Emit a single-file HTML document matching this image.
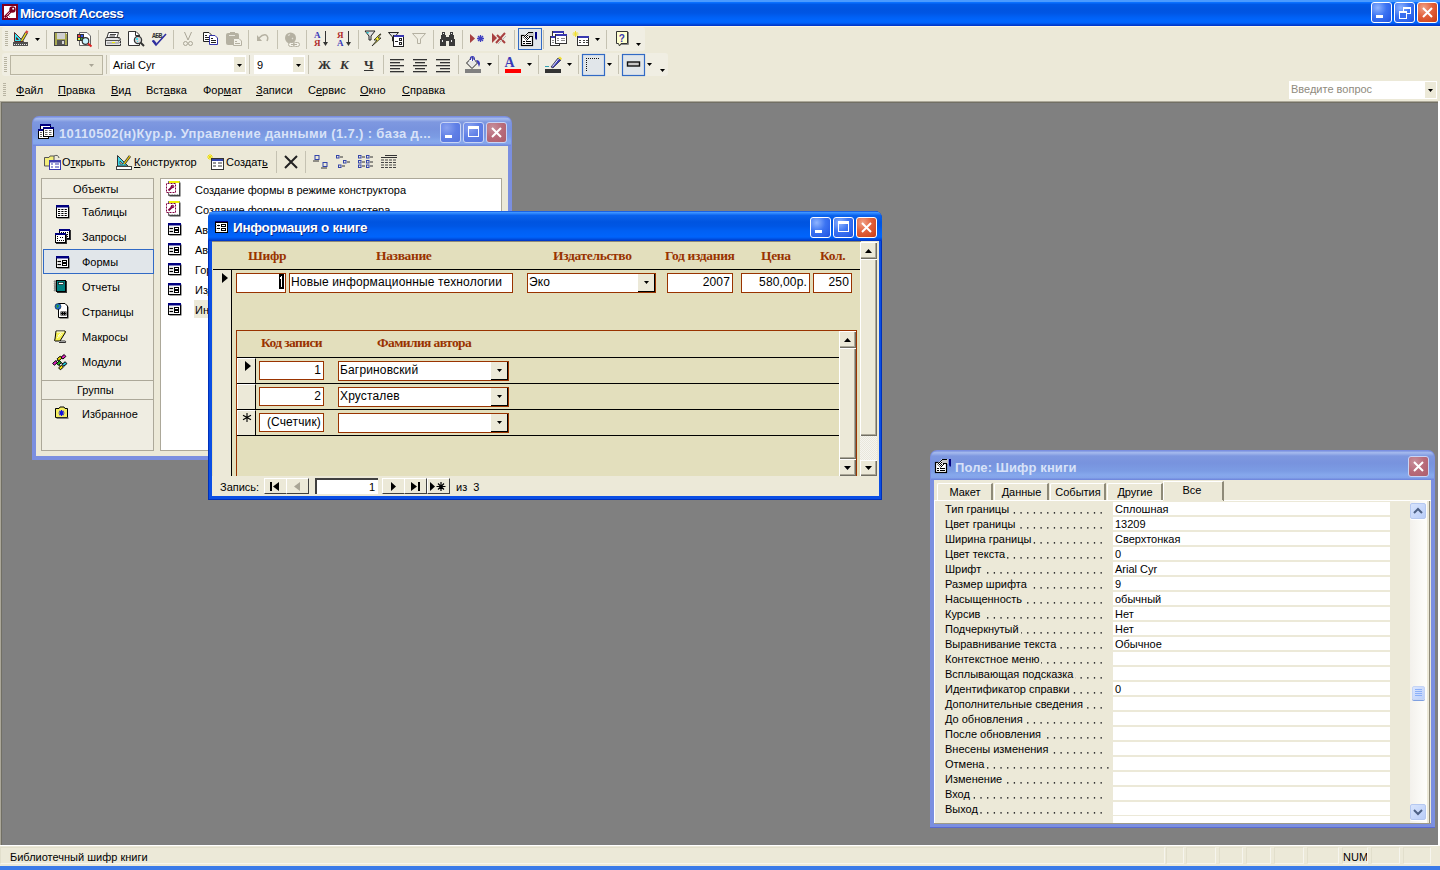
<!DOCTYPE html><html><head><meta charset="utf-8"><style>
*{margin:0;padding:0;box-sizing:border-box}
html,body{width:1440px;height:870px;overflow:hidden;background:#808080;font-family:"Liberation Sans",sans-serif;font-size:11px;color:#000}
.a{position:absolute}
.t{position:absolute;white-space:nowrap;font-size:11px;line-height:13px}
.u{text-decoration:underline}
svg{position:absolute;overflow:visible}
.sep{position:absolute;width:1px;background:#C5C2B2}
.xpbtn{position:absolute;width:21px;height:21px;border:1px solid #fff;border-radius:3px}
</style></head><body><div style="position:absolute;left:0px;top:0px;width:1440px;height:26px;background:linear-gradient(#4A9AFF 0,#4A9AFF 1.5px,#0A70FF 2.5px,#0058E6 4.5px,#0054E0 9px,#0056E4 13px,#0060F4 17px,#0066FF 21px,#0062FA 23px,#0048D8 24.5px,#0030C8 26px)"></div>
<svg style="left:2px;top:4px" width="16" height="16" viewBox="0 0 16 16"><rect x="0" y="0" width="16" height="16" fill="#800020"/><rect x="2" y="2" width="12" height="12" fill="#fff"/><path d="M3.5 12.5 L9 7" stroke="#800020" stroke-width="2.6" stroke-linecap="round"/><path d="M5 13 L6 14 M6.5 11.5 L7.5 12.5" stroke="#800020" stroke-width="1"/><circle cx="10.5" cy="5.5" r="3.2" fill="#800020"/><circle cx="11.2" cy="4.8" r="1" fill="#fff"/><path d="M4.5 11.5 L8 8" stroke="#fff" stroke-width="0.7"/></svg>
<div class="t" style="left:20px;top:6px;font-size:13.5px;font-weight:bold;color:#fff;line-height:16px;letter-spacing:-0.5px;text-shadow:1px 1px 0 #0A2A8A">Microsoft Access</div>
<div class="xpbtn" style="left:1371px;top:2px;background:radial-gradient(circle at 30% 25%,#8FB4FF 0,#3C74F2 45%,#2A5FE8 80%,#1D4FD8 100%);border-color:#fff"><div class="a" style="left:4px;top:12px;width:7px;height:3px;background:#fff"></div></div><div class="xpbtn" style="left:1394px;top:2px;background:radial-gradient(circle at 30% 25%,#8FB4FF 0,#3C74F2 45%,#2A5FE8 80%,#1D4FD8 100%);border-color:#fff"><div class="a" style="left:8px;top:4px;width:8px;height:7px;border:1px solid #fff;border-top-width:2px"></div><div class="a" style="left:4px;top:8px;width:8px;height:8px;border:1px solid #fff;border-top-width:2px;background:#3A6FEF"></div></div><div class="xpbtn" style="left:1417px;top:2px;background:radial-gradient(circle at 30% 25%,#F0A287 0,#E2613B 45%,#D24A22 80%,#C23A18 100%);border-color:#fff"><svg style="left:4px;top:4px" width="11" height="11" viewBox="0 0 11 11"><path d="M1 1 L10 10 M10 1 L1 10" stroke="#fff" stroke-width="2"/></svg></div>
<div style="position:absolute;left:0px;top:26px;width:1440px;height:76px;background:#ECE9D8"></div>
<div style="position:absolute;left:0px;top:26px;width:1440px;height:1px;background:#FBF7E6"></div>
<div style="position:absolute;left:2px;top:27px;width:643px;height:24px;background:#F0EEE3;border-radius:3px"></div>
<div style="position:absolute;left:2px;top:53px;width:666px;height:23px;background:#F0EEE3;border-radius:3px"></div>
<div style="position:absolute;left:2px;top:78px;width:1436px;height:23px;background:#ECE9D8"></div>
<div style="position:absolute;left:5px;top:31px;width:3px;height:1px;background:#B8B4A2"></div>
<div style="position:absolute;left:5px;top:33px;width:3px;height:1px;background:#B8B4A2"></div>
<div style="position:absolute;left:5px;top:35px;width:3px;height:1px;background:#B8B4A2"></div>
<div style="position:absolute;left:5px;top:37px;width:3px;height:1px;background:#B8B4A2"></div>
<div style="position:absolute;left:5px;top:39px;width:3px;height:1px;background:#B8B4A2"></div>
<div style="position:absolute;left:5px;top:41px;width:3px;height:1px;background:#B8B4A2"></div>
<div style="position:absolute;left:5px;top:43px;width:3px;height:1px;background:#B8B4A2"></div>
<div style="position:absolute;left:5px;top:45px;width:3px;height:1px;background:#B8B4A2"></div>
<div style="position:absolute;left:4px;top:57px;width:3px;height:1px;background:#B8B4A2"></div>
<div style="position:absolute;left:4px;top:59px;width:3px;height:1px;background:#B8B4A2"></div>
<div style="position:absolute;left:4px;top:61px;width:3px;height:1px;background:#B8B4A2"></div>
<div style="position:absolute;left:4px;top:63px;width:3px;height:1px;background:#B8B4A2"></div>
<div style="position:absolute;left:4px;top:65px;width:3px;height:1px;background:#B8B4A2"></div>
<div style="position:absolute;left:4px;top:67px;width:3px;height:1px;background:#B8B4A2"></div>
<div style="position:absolute;left:4px;top:69px;width:3px;height:1px;background:#B8B4A2"></div>
<div style="position:absolute;left:4px;top:71px;width:3px;height:1px;background:#B8B4A2"></div>
<div style="position:absolute;left:3px;top:83px;width:3px;height:1px;background:#B8B4A2"></div>
<div style="position:absolute;left:3px;top:85px;width:3px;height:1px;background:#B8B4A2"></div>
<div style="position:absolute;left:3px;top:87px;width:3px;height:1px;background:#B8B4A2"></div>
<div style="position:absolute;left:3px;top:89px;width:3px;height:1px;background:#B8B4A2"></div>
<div style="position:absolute;left:3px;top:91px;width:3px;height:1px;background:#B8B4A2"></div>
<div style="position:absolute;left:3px;top:93px;width:3px;height:1px;background:#B8B4A2"></div>
<div style="position:absolute;left:3px;top:95px;width:3px;height:1px;background:#B8B4A2"></div>
<div style="position:absolute;left:46px;top:30px;width:1px;height:19px;background:#C5C2B2"></div>
<div style="position:absolute;left:98px;top:30px;width:1px;height:19px;background:#C5C2B2"></div>
<div style="position:absolute;left:173px;top:30px;width:1px;height:19px;background:#C5C2B2"></div>
<div style="position:absolute;left:248px;top:30px;width:1px;height:19px;background:#C5C2B2"></div>
<div style="position:absolute;left:277px;top:30px;width:1px;height:19px;background:#C5C2B2"></div>
<div style="position:absolute;left:306px;top:30px;width:1px;height:19px;background:#C5C2B2"></div>
<div style="position:absolute;left:358px;top:30px;width:1px;height:19px;background:#C5C2B2"></div>
<div style="position:absolute;left:433px;top:30px;width:1px;height:19px;background:#C5C2B2"></div>
<div style="position:absolute;left:462px;top:30px;width:1px;height:19px;background:#C5C2B2"></div>
<div style="position:absolute;left:514px;top:30px;width:1px;height:19px;background:#C5C2B2"></div>
<div style="position:absolute;left:543px;top:30px;width:1px;height:19px;background:#C5C2B2"></div>
<div style="position:absolute;left:606px;top:30px;width:1px;height:19px;background:#C5C2B2"></div>
<div style="position:absolute;left:106px;top:55px;width:1px;height:19px;background:#C5C2B2"></div>
<div style="position:absolute;left:249px;top:55px;width:1px;height:19px;background:#C5C2B2"></div>
<div style="position:absolute;left:308px;top:55px;width:1px;height:19px;background:#C5C2B2"></div>
<div style="position:absolute;left:383px;top:55px;width:1px;height:19px;background:#C5C2B2"></div>
<div style="position:absolute;left:458px;top:55px;width:1px;height:19px;background:#C5C2B2"></div>
<div style="position:absolute;left:498px;top:55px;width:1px;height:19px;background:#C5C2B2"></div>
<div style="position:absolute;left:538px;top:55px;width:1px;height:19px;background:#C5C2B2"></div>
<div style="position:absolute;left:578px;top:55px;width:1px;height:19px;background:#C5C2B2"></div>
<div style="position:absolute;left:618px;top:55px;width:1px;height:19px;background:#C5C2B2"></div>
<svg style="left:0;top:0" width="700" height="60" viewBox="0 0 700 60">
<g id="design">
 <path d="M14 32 L14 42 L24 42 Z" fill="#37E4F0"/>
 <path d="M14.5 32.5 L14.5 41.5 L23.5 41.5 Z" fill="none" stroke="#5A2A2A" stroke-width="1"/>
 <path d="M16.5 37.5 L16.5 39.5 L18.5 39.5 Z" fill="#ECE9D8" stroke="#5A2A2A" stroke-width="1"/>
 <rect x="13" y="42" width="15" height="4" fill="#505050"/>
 <path d="M14 44.5 H27" stroke="#E8E8E8" stroke-width="1" stroke-dasharray="1 1"/>
 <path d="M21.5 41 L26.5 32.5" stroke="#333" stroke-width="3"/>
 <path d="M21.5 41 L26.5 32.5" stroke="#F5E020" stroke-width="1.4"/>
 <path d="M26 33 L27.5 31" stroke="#D84040" stroke-width="2.5"/>
</g>
<path d="M35 38 H40 L37.5 41 Z" fill="#000"/>
<g id="save">
 <rect x="54" y="32" width="14" height="14" fill="#444"/>
 <rect x="55" y="33" width="12" height="12" fill="#A8A850"/>
 <rect x="57" y="33" width="8" height="6" fill="#D0D0D0"/>
 <rect x="57" y="40" width="8" height="5" fill="#555"/>
 <rect x="62" y="41" width="2" height="3" fill="#D8D8D8"/>
 <rect x="66" y="33" width="1" height="1" fill="#eee"/>
</g>
<g id="webprev">
 <path d="M79.5 32.5 H87 L90.5 36 V45.5 H79.5 Z" fill="#fff" stroke="#666"/>
 <rect x="77" y="34" width="7" height="7" fill="#333"/>
 <rect x="78" y="35" width="2" height="2" fill="#F04040"/><rect x="81" y="35" width="2" height="2" fill="#3050F0"/>
 <rect x="78" y="38" width="2" height="2" fill="#F0F030"/><rect x="81" y="38" width="2" height="2" fill="#30B030"/>
 <circle cx="85.5" cy="41" r="3.3" fill="#C8F4FF" stroke="#333" stroke-width="1.2"/>
 <path d="M88 43.5 L91.5 46.5" stroke="#E02020" stroke-width="2"/>
</g>
<g id="print">
 <path d="M108.5 32.5 H118.5 L117 37.5 H107 Z" fill="#fff" stroke="#333"/>
 <path d="M110 34.5 H116 M109.5 36 H115" stroke="#444" stroke-width="1"/>
 <path d="M106.5 37.5 H119.5 L120.5 39.5 V45.5 H105.5 V39.5 Z" fill="#E4E4E4" stroke="#333"/>
 <path d="M106 40.5 H120" stroke="#555"/>
 <rect x="107" y="42" width="12" height="2" fill="#B8B8B8"/>
 <rect x="112" y="42" width="3" height="1" fill="#F0F000"/>
 <path d="M118 38 L121 41 M118 41 L121 44" stroke="#999" stroke-width="1"/>
</g>
<g id="preview">
 <path d="M128.5 31.5 H136 L139.5 35 V45.5 H128.5 Z" fill="#fff" stroke="#333"/>
 <path d="M135.5 31.5 V35.5 H139.5" fill="none" stroke="#333"/>
 <circle cx="138" cy="40" r="3.6" fill="#D8D8D8" stroke="#333" stroke-width="1.3"/>
 <rect x="136" y="38" width="2" height="2" fill="#40E0F0"/><rect x="137" y="41" width="1" height="1" fill="#40E0F0"/>
 <path d="M140.5 42.5 L144 46" stroke="#333" stroke-width="2"/>
</g>
<g id="spell">
 <text x="152" y="37.5" font-size="6.5" font-family="Liberation Mono" font-weight="bold" fill="#333" letter-spacing="-0.6">АБВ</text>
 <path d="M152.5 40.5 L156 45 L166 34" stroke="#3030A0" stroke-width="1.6" fill="none"/>
 <path d="M153 40.5 L156 44" stroke="#3030A0" stroke-width="2.2"/>
</g>
<g id="cut" stroke="#A9A596" fill="none">
 <path d="M184.5 32 L188 40 M191.5 32 L188 40" stroke-width="1"/>
 <circle cx="185.5" cy="43.5" r="2"/><circle cx="190.5" cy="43.5" r="2"/>
</g>
<g id="copy">
 <path d="M203.5 32.5 H209 L211.5 35 V41.5 H203.5 Z" fill="#fff" stroke="#222"/>
 <path d="M205 35.5 H207 M205 37.5 H209 M205 39.5 H209" stroke="#222"/>
 <path d="M209.5 35.5 H215 L217.5 38 V44.5 H209.5 Z" fill="#fff" stroke="#3333A8"/>
 <path d="M211 38.5 H213 M211 40.5 H216 M211 42.5 H216" stroke="#222"/>
</g>
<g id="paste">
 <rect x="226" y="33" width="13" height="12" rx="2" fill="#B5B1A2"/>
 <rect x="230" y="32" width="5" height="2" fill="#B5B1A2"/>
 <path d="M229 35.5 H235" stroke="#E8E6DC"/>
 <path d="M233.5 38.5 H239 L241.5 41 V45.5 H233.5 Z" fill="#F3F1E8" stroke="#B5B1A2"/>
 <path d="M235 41.5 H237 M235 43.5 H240" stroke="#B5B1A2"/>
</g>
<g id="undo">
 <path d="M259 38 Q263 34 266 35 Q269 37 267 41" stroke="#B5B1A2" stroke-width="1.5" fill="none"/>
 <path d="M257 35 L257 41 L262 41 Z" fill="#B5B1A2"/>
</g>
<g id="link">
 <circle cx="290.5" cy="38" r="5.5" fill="#B5B1A2"/>
 <path d="M288 35.5 L290 34.5 M292 38 L293 39" stroke="#E0DED4" stroke-width="1.2"/>
 <rect x="288.5" y="42.5" width="6" height="4" rx="2" fill="#F3F1E8" stroke="#B5B1A2"/>
 <rect x="293.5" y="42.5" width="6" height="4" rx="2" fill="#F3F1E8" stroke="#B5B1A2"/>
 <path d="M291 44.5 H297" stroke="#B5B1A2"/>
</g>
<g id="sortasc">
 <text x="314" y="38" font-size="9" font-family="Liberation Serif" font-weight="bold" fill="#3A3AB8">A</text>
 <text x="314" y="46" font-size="9" font-family="Liberation Serif" font-weight="bold" fill="#B02C2C">Я</text>
 <path d="M325.5 31 V44" stroke="#333" stroke-width="1"/>
 <path d="M323 42 L325.5 46 L328 42 Z" fill="#333"/>
</g>
<g id="sortdesc">
 <text x="337" y="38" font-size="9" font-family="Liberation Serif" font-weight="bold" fill="#B02C2C">Я</text>
 <text x="337" y="46" font-size="9" font-family="Liberation Serif" font-weight="bold" fill="#3A3AB8">A</text>
 <path d="M348.5 31 V44" stroke="#333" stroke-width="1"/>
 <path d="M346 42 L348.5 46 L351 42 Z" fill="#333"/>
</g>
<g id="filtsel">
 <path d="M365 31 H375 L371 36 V40 H369 V36 Z" fill="#E0E0E0" stroke="#222" stroke-width="1"/>
 <path d="M366 32 H369 L368 34 Z" fill="#30C8D0"/>
 <path d="M380 34 L374 40 H377 L372 46 L381 38 H378 L381 34 Z" fill="#F5F030" stroke="#222" stroke-width="0.8"/>
</g>
<g id="filtform">
 <path d="M388.5 32.5 H398.5 L394.5 37 V41 H392.5 V37 Z" fill="#E0E0E0" stroke="#222"/>
 <rect x="393.5" y="35.5" width="10" height="11" fill="#fff" stroke="#222"/>
 <rect x="394" y="35" width="10" height="2" fill="#3838B0"/>
 <rect x="399.5" y="38.5" width="2" height="2" fill="none" stroke="#222"/>
 <rect x="399.5" y="42.5" width="2" height="2" fill="none" stroke="#222"/>
 <path d="M395 41.5 H398" stroke="#222"/>
</g>
<g id="toggle">
 <path d="M412.5 33.5 H425.5 L420.5 39 V43.5 H417.5 V39 Z" fill="none" stroke="#B5B1A2"/>
</g>
<g id="find" fill="#3A3A3A">
 <rect x="442" y="32" width="3" height="3"/><rect x="450" y="32" width="3" height="3"/>
 <rect x="441" y="35" width="5" height="4"/><rect x="449" y="35" width="5" height="4"/>
 <rect x="440" y="39" width="6" height="7"/><rect x="449" y="39" width="6" height="7"/>
 <rect x="446" y="37" width="3" height="4"/>
 <rect x="442" y="40" width="1" height="2" fill="#eee"/><rect x="451" y="40" width="1" height="2" fill="#eee"/>
 <rect x="443" y="33" width="1" height="1" fill="#eee"/><rect x="451" y="33" width="1" height="1" fill="#eee"/>
</g>
<g id="newrec">
 <path d="M470 34 V43 L475 38.5 Z" fill="#A84040"/>
 <path d="M480.5 35 V42 M477 38.5 H484 M478 36 L483 41 M483 36 L478 41" stroke="#4040C0" stroke-width="1.3"/>
</g>
<g id="delrec">
 <path d="M492 33 V43 L497 38 Z" fill="#A84040"/>
 <path d="M497 35 L505 43 M505 33 L496 43" stroke="#A84040" stroke-width="2"/>
 <path d="M498 44 L506 36" stroke="#B8B8B8" stroke-width="1"/>
</g>
<rect x="518.5" y="28.5" width="23" height="21" fill="#E1E6EA" stroke="#316AC5"/>

<g id="dbwin">
 <rect x="552.5" y="31.5" width="11" height="9" fill="#fff" stroke="#333"/>
 <rect x="553" y="31" width="11" height="2" fill="#3838B0"/>
 <rect x="550.5" y="36.5" width="9" height="9" fill="#fff" stroke="#333"/>
 <rect x="551" y="36" width="9" height="2" fill="#3838B0"/>
 <rect x="555.5" y="34.5" width="11" height="9" fill="#fff" stroke="#333"/>
 <rect x="556" y="34" width="11" height="2" fill="#3838B0"/>
 <path d="M557 38.5 H559 M561 38.5 H565 M557 40.5 H559 M561 40.5 H565 M552 40.5 H554 M552 42.5 H554" stroke="#888"/>
</g>
<g id="newobj">
 <path d="M575.5 31 V37 M572.5 34 H578.5 M573.5 32 L577.5 36 M577.5 32 L573.5 36" stroke="#F0E030" stroke-width="1"/>
 <rect x="577.5" y="36.5" width="11" height="9" fill="#fff" stroke="#333"/>
 <rect x="578" y="36" width="11" height="2" fill="#3838B0"/>
 <path d="M579 40.5 H581 M583 40.5 H585 M586 40.5 H588 M579 42.5 H581 M583 42.5 H585 M586 42.5 H588" stroke="#444"/>
</g>
<path d="M595 38 H600 L597.5 41 Z" fill="#000"/>
<g id="help">
 <path d="M616.5 31.5 H627.5 V43.5 H621 L619.5 46 L618.5 43.5 H616.5 Z" fill="#FFFFD0" stroke="#333"/>
 <path d="M628.5 32 V44.5 H621" stroke="#888" fill="none"/>
 <text x="618.8" y="41.5" font-size="10" font-weight="bold" font-family="Liberation Sans" fill="#3838B0">?</text>
</g>
<path d="M636 43 H641 L638.5 46 Z" fill="#000"/>
</svg>
<svg style="left:521px;top:31px" width="17" height="16" viewBox="0 0 17 16"><defs><pattern id="pk1" width="2" height="2" patternUnits="userSpaceOnUse"><rect width="2" height="2" fill="#fff"/><rect width="1" height="1" fill="#000"/><rect x="1" y="1" width="1" height="1" fill="#000"/></pattern></defs><rect x="0.5" y="4.5" width="11" height="10" fill="#fff" stroke="#000" stroke-width="1.2"/><path d="M2 10.5 H4 M5 10.5 H10 M2 12.5 H4 M5 12.5 H10" stroke="#000"/><path d="M2 6 L7 1 L11 5 L6 10 Z" fill="url(#pk1)"/><rect x="7" y="1" width="6" height="5" fill="#C8C8C8"/><path d="M7 1.5 H12 M8 5.5 H12" stroke="#000"/><path d="M14 1 H16 V8 L15 9 L14 7Z" fill="#000080"/></svg>
<div style="position:absolute;left:10px;top:55px;width:93px;height:20px;border:1px solid #B9B5A2;background:#ECE9D8"></div>
<svg style="left:89px;top:64px" width="5" height="3" viewBox="0 0 5 3"><path d="M0 0 H5 L2.5 3Z" fill="#A9A596"/></svg>
<div style="position:absolute;left:110px;top:55px;width:136px;height:19px;background:#fff"></div>
<div style="position:absolute;left:234px;top:57px;width:11px;height:15px;background:#ECE9D8"></div>
<svg style="left:237px;top:64px" width="5" height="3" viewBox="0 0 5 3"><path d="M0 0 H5 L2.5 3Z" fill="#000"/></svg>
<div class="t" style="left:113px;top:59px;font-size:11px">Arial Cyr</div>
<div style="position:absolute;left:254px;top:55px;width:51px;height:19px;background:#fff"></div>
<div style="position:absolute;left:293px;top:57px;width:11px;height:15px;background:#ECE9D8"></div>
<svg style="left:296px;top:64px" width="5" height="3" viewBox="0 0 5 3"><path d="M0 0 H5 L2.5 3Z" fill="#000"/></svg>
<div class="t" style="left:257px;top:59px;font-size:11px">9</div>
<div class="t" style="left:318px;top:57px;font-family:'Liberation Serif';font-weight:bold;font-size:13px;color:#333;line-height:15px">Ж</div>
<div class="t" style="left:340px;top:57px;font-family:'Liberation Serif';font-weight:bold;font-style:italic;font-size:13px;color:#333;line-height:15px">К</div>
<div class="t" style="left:364px;top:57px;font-family:'Liberation Serif';font-weight:bold;font-size:13px;color:#333;line-height:15px;text-decoration:underline">Ч</div>
<svg style="left:390px;top:59px" width="14" height="14" viewBox="0 0 14 14"><rect x="0" y="0" width="14" height="1.3" fill="#333"/><rect x="0" y="3" width="10" height="1.3" fill="#333"/><rect x="0" y="6" width="14" height="1.3" fill="#333"/><rect x="0" y="9" width="10" height="1.3" fill="#333"/><rect x="0" y="12" width="14" height="1.3" fill="#333"/></svg>
<svg style="left:413px;top:59px" width="14" height="14" viewBox="0 0 14 14"><rect x="0.0" y="0" width="14" height="1.3" fill="#333"/><rect x="2.0" y="3" width="10" height="1.3" fill="#333"/><rect x="0.0" y="6" width="14" height="1.3" fill="#333"/><rect x="2.0" y="9" width="10" height="1.3" fill="#333"/><rect x="0.0" y="12" width="14" height="1.3" fill="#333"/></svg>
<svg style="left:436px;top:59px" width="14" height="14" viewBox="0 0 14 14"><rect x="0" y="0" width="14" height="1.3" fill="#333"/><rect x="4" y="3" width="10" height="1.3" fill="#333"/><rect x="0" y="6" width="14" height="1.3" fill="#333"/><rect x="4" y="9" width="10" height="1.3" fill="#333"/><rect x="0" y="12" width="14" height="1.3" fill="#333"/></svg>
<svg style="left:0;top:0" width="700" height="80" viewBox="0 0 700 80">
<g id="fill">
 <path d="M472 57.5 L477.5 63 L472 68.5 L466.5 63 Z" fill="#E8E8E8" stroke="#222" stroke-width="1"/>
 <path d="M469 61 L472 58 L475 61" fill="#fff"/>
 <path d="M470.5 60 Q470 56.5 472.5 56.5 Q474.5 56.5 474.5 60" fill="none" stroke="#3A3AB8" stroke-width="1.2"/>
 <path d="M472.5 57 V61" stroke="#3A3AB8" stroke-width="1"/>
 <path d="M476 60 Q480 60 480 64 L479 67 L478 64 Z" fill="#3A3AB8"/>
 <rect x="465" y="69" width="16" height="4" fill="#808080"/>
</g>
<path d="M487 63 H492 L489.5 66 Z" fill="#000"/>
<g id="fontcolor">
 <text x="504.5" y="67" font-size="14" font-family="Liberation Serif" font-weight="bold" fill="#3A3AB8">A</text>
 <rect x="505" y="69" width="16" height="4" fill="#FF0000"/>
</g>
<path d="M527 63 H532 L529.5 66 Z" fill="#000"/>
<g id="linecolor">
 <path d="M551 67 L558 58 L561 60 L553 68 Z" fill="#3A3AB8" stroke="#222" stroke-width="0.6"/>
 <path d="M552.5 66.5 L558.5 59" stroke="#fff" stroke-width="0.9"/>
 <path d="M558 58 L560 56.5 L562 58.5 L561 60 Z" fill="#F0E030"/>
 <path d="M545 66.5 H549" stroke="#30A0B0" stroke-width="1"/>
 <rect x="545" y="69" width="16" height="4" fill="#333"/>
</g>
<path d="M567 63 H572 L569.5 66 Z" fill="#000"/>
<rect x="582.5" y="54.5" width="22" height="21" fill="#E1E6EA" stroke="#316AC5" stroke-width="1.2"/>
<path d="M586 58.5 H600" stroke="#111" stroke-dasharray="1 1"/>
<path d="M586.5 60 V72" stroke="#111" stroke-dasharray="1 1"/>
<path d="M607 63 H612 L609.5 66 Z" fill="#000"/>
<rect x="622.5" y="54.5" width="22" height="21" fill="#E1E6EA" stroke="#316AC5" stroke-width="1.2"/>
<rect x="627.5" y="62" width="12" height="4" fill="#C8C8C8" stroke="#111" stroke-width="1.4"/>
<path d="M647 63 H652 L649.5 66 Z" fill="#000"/>
<path d="M660 69 H665 L662.5 72 Z" fill="#000"/>
</svg>
<div class="t" style="left:16px;top:84px;font-size:11px"><span class="u">Ф</span>айл</div>
<div class="t" style="left:58px;top:84px;font-size:11px"><span class="u">П</span>равка</div>
<div class="t" style="left:111px;top:84px;font-size:11px"><span class="u">В</span>ид</div>
<div class="t" style="left:146px;top:84px;font-size:11px">Вст<span class="u">а</span>вка</div>
<div class="t" style="left:203px;top:84px;font-size:11px">Фор<span class="u">м</span>ат</div>
<div class="t" style="left:256px;top:84px;font-size:11px"><span class="u">З</span>аписи</div>
<div class="t" style="left:308px;top:84px;font-size:11px">С<span class="u">е</span>рвис</div>
<div class="t" style="left:360px;top:84px;font-size:11px"><span class="u">О</span>кно</div>
<div class="t" style="left:402px;top:84px;font-size:11px"><span class="u">С</span>правка</div>
<div style="position:absolute;left:1289px;top:81px;width:148px;height:18px;background:#fff"></div>
<div style="position:absolute;left:1425px;top:82px;width:11px;height:16px;background:#ECE9D8"></div>
<svg style="left:1428px;top:89px" width="5" height="3" viewBox="0 0 5 3"><path d="M0 0 H5 L2.5 3Z" fill="#000"/></svg>
<div class="t" style="left:1291px;top:83px;color:#8F8B7E">Введите вопрос</div>
<div style="position:absolute;left:0px;top:101px;width:1440px;height:1px;background:#ACA899"></div>
<div style="position:absolute;left:1px;top:102px;width:1437px;height:1px;background:#716F64"></div>
<div style="position:absolute;left:1px;top:102px;width:1px;height:743px;background:#716F64"></div>
<div style="position:absolute;left:0px;top:101px;width:1px;height:744px;background:#ACA899"></div>
<div style="position:absolute;left:1438px;top:101px;width:2px;height:744px;background:#fff"></div>
<div style="position:absolute;left:0px;top:845px;width:1440px;height:21px;background:#ECE9D8;border-top:1px solid #fff"></div>
<div class="t" style="left:10px;top:851px;">Библиотечный шифр книги</div>
<div class="t" style="left:1343px;top:851px;">NUM</div>
<div style="position:absolute;left:0px;top:847px;width:1165px;height:17px;border:1px solid #E2DFCC;border-right-color:#F6F5EE;border-bottom-color:#F6F5EE"></div>
<div style="position:absolute;left:1166px;top:847px;width:18px;height:17px;border:1px solid #E2DFCC;border-right-color:#F6F5EE;border-bottom-color:#F6F5EE"></div>
<div style="position:absolute;left:1186px;top:847px;width:30px;height:17px;border:1px solid #E2DFCC;border-right-color:#F6F5EE;border-bottom-color:#F6F5EE"></div>
<div style="position:absolute;left:1219px;top:847px;width:24px;height:17px;border:1px solid #E2DFCC;border-right-color:#F6F5EE;border-bottom-color:#F6F5EE"></div>
<div style="position:absolute;left:1246px;top:847px;width:25px;height:17px;border:1px solid #E2DFCC;border-right-color:#F6F5EE;border-bottom-color:#F6F5EE"></div>
<div style="position:absolute;left:1274px;top:847px;width:30px;height:17px;border:1px solid #E2DFCC;border-right-color:#F6F5EE;border-bottom-color:#F6F5EE"></div>
<div style="position:absolute;left:1307px;top:847px;width:32px;height:17px;border:1px solid #E2DFCC;border-right-color:#F6F5EE;border-bottom-color:#F6F5EE"></div>
<div style="position:absolute;left:1342px;top:847px;width:26px;height:17px;border:1px solid #E2DFCC;border-right-color:#F6F5EE;border-bottom-color:#F6F5EE"></div>
<div style="position:absolute;left:1371px;top:847px;width:29px;height:17px;border:1px solid #E2DFCC;border-right-color:#F6F5EE;border-bottom-color:#F6F5EE"></div>
<div style="position:absolute;left:1403px;top:847px;width:28px;height:17px;border:1px solid #E2DFCC;border-right-color:#F6F5EE;border-bottom-color:#F6F5EE"></div>
<div style="position:absolute;left:0px;top:866px;width:1440px;height:4px;background:#3A7AE8"></div>
<div style="position:absolute;left:32px;top:116px;width:480px;height:344px;background:#7B8FE0;border-radius:7px 7px 0 0"></div>
<div style="position:absolute;left:33px;top:117px;width:478px;height:29px;background:linear-gradient(#7088DC 0,#A6BAEE 1px,#9CB2EA 2.5px,#7E98E0 5px,#7893DE 12px,#7C9CE4 20px,#86A8EC 24px,#84A4EA 26.5px,#6C82DA 29px);border-radius:6px 6px 0 0"></div>
<div style="position:absolute;left:36px;top:146px;width:472px;height:310px;background:#ECE9D8"></div>
<svg style="left:38px;top:124px" width="16" height="15" viewBox="0 0 16 15"><rect x="2" y="0" width="11" height="6" fill="#000"/><rect x="3" y="2" width="9" height="3" fill="#fff"/><rect x="2" y="0" width="11" height="2" fill="#000080"/><rect x="0" y="5" width="11" height="10" fill="#000"/><rect x="1" y="7" width="9" height="7" fill="#fff"/><rect x="0" y="5" width="11" height="2" fill="#000080"/><path d="M2 8.5 H4 M2 10.5 H4 M2 12.5 H4" stroke="#666"/><rect x="5" y="3" width="11" height="10" fill="#000"/><rect x="6" y="5" width="9" height="7" fill="#fff"/><rect x="5" y="3" width="11" height="2" fill="#000080"/><path d="M7 6.5 H9.5 M11 6.5 H13.5 M7 8.5 H9.5 M11 8.5 H13.5 M7 10.5 H9.5 M11 10.5 H13.5" stroke="#666"/></svg>
<div class="t" style="left:59px;top:126px;font-size:13px;font-weight:bold;color:#D8E2F8;line-height:15px;letter-spacing:0.35px">10110502(н)Кур.р. Управление данными (1.7.) : база д...</div>
<div class="xpbtn" style="left:440px;top:122px;background:radial-gradient(circle at 30% 25%,#8AA2F0 0,#5F7FE6 50%,#5675DF 100%);border-color:#C9D4F5"><div class="a" style="left:4px;top:12px;width:7px;height:3px;background:#fff"></div></div><div class="xpbtn" style="left:463px;top:122px;background:radial-gradient(circle at 30% 25%,#8AA2F0 0,#5F7FE6 50%,#5675DF 100%);border-color:#C9D4F5"><div class="a" style="left:4px;top:3px;width:11px;height:11px;border:1px solid #fff;border-top-width:3px"></div></div><div class="xpbtn" style="left:486px;top:122px;background:radial-gradient(circle at 30% 25%,#C7909C 0,#B86B7A 50%,#AD5D6C 100%);border-color:#C9D4F5"><svg style="left:4px;top:4px" width="11" height="11" viewBox="0 0 11 11"><path d="M1 1 L10 10 M10 1 L1 10" stroke="#fff" stroke-width="2"/></svg></div>
<svg style="left:44px;top:154px" width="17" height="16" viewBox="0 0 17 16"><path d="M0.5 3.5 H5 L6 2 H10 V12 H0.5Z" fill="#F3EE7A" stroke="#555"/><path d="M10 2 Q14 0 15 4" stroke="#555" fill="none"/><rect x="5.5" y="6.5" width="11" height="9" fill="#fff" stroke="#3A3AB0"/><rect x="6" y="7" width="10" height="1.5" fill="#3A3AB0"/><path d="M7 10 H9 M7 13 H9 M11 10 H15 M11 13 H15" stroke="#3A3AB0" stroke-width="1.2"/></svg>
<div class="t" style="left:62px;top:156px;">О<span class="u">т</span>крыть</div>
<svg style="left:116px;top:154px" width="16" height="16" viewBox="0 0 16 16"><path d="M1.5 1.5 L1.5 12 L12 12 Z" fill="#3FD6E6" stroke="#333" stroke-width="1"/><path d="M4 7 L4 10 L7 10Z" fill="#ECE9D8" stroke="#333" stroke-width="0.8"/><rect x="0.5" y="12.5" width="15" height="3" fill="#fff" stroke="#444"/><path d="M8 10 L14 2" stroke="#333" stroke-width="2.6"/><path d="M8 10 L14 2" stroke="#F5D000" stroke-width="1.2"/></svg>
<div class="t" style="left:134px;top:156px;"><span class="u">К</span>онструктор</div>
<svg style="left:207px;top:154px" width="17" height="16" viewBox="0 0 17 16"><path d="M3 0 V6 M0 3 H6 M1 1 L5 5 M5 1 L1 5" stroke="#EEDD00" stroke-width="1"/><rect x="4.5" y="4.5" width="12" height="11" fill="#fff" stroke="#333"/><rect x="5" y="5" width="11" height="2" fill="#3344AA"/><path d="M6 9 H9 M6 12 H9 M11 9 H15 M11 12 H15" stroke="#333" stroke-width="1.2"/></svg>
<div class="t" style="left:226px;top:156px;">Создат<span class="u">ь</span></div>
<div style="position:absolute;left:276px;top:151px;width:1px;height:22px;background:#C5C2B2"></div>
<div style="position:absolute;left:305px;top:151px;width:1px;height:22px;background:#C5C2B2"></div>
<svg style="left:284px;top:155px" width="14" height="14" viewBox="0 0 14 14"><path d="M1 1 L13 13 M13 1 L1 13" stroke="#222" stroke-width="2"/></svg>
<svg style="left:313px;top:155px" width="14" height="14" viewBox="0 0 14 14"><rect x="2" y="0.5" width="4" height="4" fill="none" stroke="#3344AA"/><path d="M0 6 H6" stroke="#333"/><rect x="10" y="7.5" width="4" height="4" fill="none" stroke="#3344AA"/><path d="M8 13 H14" stroke="#333"/></svg>
<svg style="left:336px;top:155px" width="15" height="13" viewBox="0 0 15 13"><rect x="0.5" y="0.5" width="2.5" height="2.5" fill="none" stroke="#3344AA"/><path d="M4 2 H7" stroke="#333"/><rect x="7.5" y="5.5" width="2.5" height="2.5" fill="none" stroke="#3344AA"/><path d="M11 7 H14" stroke="#333"/><rect x="2.5" y="10" width="2.5" height="2.5" fill="none" stroke="#3344AA"/><path d="M6 11 H9" stroke="#333"/></svg>
<svg style="left:358px;top:155px" width="16" height="13" viewBox="0 0 16 13"><rect x="0.5" y="0.5" width="2.5" height="2.5" fill="none" stroke="#3344AA"/><path d="M4 2 H7" stroke="#333"/><rect x="8.5" y="0.5" width="2.5" height="2.5" fill="none" stroke="#3344AA"/><path d="M12 2 H15" stroke="#333"/><rect x="0.5" y="5.5" width="2.5" height="2.5" fill="none" stroke="#3344AA"/><path d="M4 7 H7" stroke="#333"/><rect x="8.5" y="5.5" width="2.5" height="2.5" fill="none" stroke="#3344AA"/><path d="M12 7 H15" stroke="#333"/><rect x="0.5" y="10" width="2.5" height="2.5" fill="none" stroke="#3344AA"/><path d="M4 11 H7" stroke="#333"/><rect x="8.5" y="10" width="2.5" height="2.5" fill="none" stroke="#3344AA"/><path d="M12 11 H15" stroke="#333"/></svg>
<svg style="left:381px;top:155px" width="16" height="14" viewBox="0 0 16 14"><path d="M4 0.5 H16 M0 2.5 H16" stroke="#333"/><path d="M0 5 H16 M0 7.5 H16 M0 10 H16 M0 12.5 H16" stroke="#444" stroke-dasharray="3 1"/></svg>
<div style="position:absolute;left:41px;top:178px;width:113px;height:273px;background:#EFEDE2;border:1px solid #ACA899"></div>
<div style="position:absolute;left:42px;top:198px;width:111px;height:1px;background:#ACA899"></div>
<div class="t" style="left:73px;top:183px;">Объекты</div>
<div class="t" style="left:82px;top:206px;">Таблицы</div>
<svg style="left:56px;top:205px" width="14" height="14" viewBox="0 0 14 14"><rect x="1.5" y="1.5" width="12" height="12" fill="#444"/><rect x="0.5" y="0.5" width="12" height="12" fill="#fff" stroke="#000"/><rect x="0" y="0" width="13" height="2.5" fill="#000080"/><rect x="2.0" y="4.0" width="2.2" height="1" fill="#000"/><rect x="5.3" y="4.0" width="2.2" height="1" fill="#000"/><rect x="8.6" y="4.0" width="2.2" height="1" fill="#000"/><rect x="2.0" y="6.0" width="2.2" height="1" fill="#000"/><rect x="5.3" y="6.0" width="2.2" height="1" fill="#000"/><rect x="8.6" y="6.0" width="2.2" height="1" fill="#000"/><rect x="2.0" y="8.0" width="2.2" height="1" fill="#000"/><rect x="5.3" y="8.0" width="2.2" height="1" fill="#000"/><rect x="8.6" y="8.0" width="2.2" height="1" fill="#000"/><rect x="2.0" y="10.0" width="2.2" height="1" fill="#000"/><rect x="5.3" y="10.0" width="2.2" height="1" fill="#000"/><rect x="8.6" y="10.0" width="2.2" height="1" fill="#000"/></svg>
<div class="t" style="left:82px;top:231px;">Запросы</div>
<svg style="left:55px;top:229px" width="16" height="15" viewBox="0 0 16 15"><rect x="5" y="1" width="11" height="10" fill="#333"/><rect x="4" y="0" width="11" height="10" fill="#000"/><rect x="5" y="2" width="9" height="7" fill="#fff"/><rect x="4" y="0" width="11" height="2" fill="#000080"/><rect x="1" y="5" width="11" height="10" fill="#333"/><rect x="0" y="4" width="11" height="10" fill="#000"/><rect x="1" y="6" width="9" height="7" fill="#fff"/><rect x="0" y="4" width="11" height="2" fill="#000080"/><rect x="12" y="3" width="1" height="1" fill="#000"/><rect x="12" y="5" width="1" height="1" fill="#000"/><rect x="12" y="7" width="1" height="1" fill="#000"/><rect x="6" y="3" width="1" height="1" fill="#000"/><rect x="8" y="3" width="1" height="1" fill="#000"/><rect x="10" y="3" width="1" height="1" fill="#000"/><rect x="2" y="7" width="1" height="1" fill="#000"/><rect x="2" y="9" width="1" height="1" fill="#000"/><rect x="2" y="11" width="1" height="1" fill="#000"/><rect x="4" y="11" width="1" height="1" fill="#000"/><rect x="6" y="11" width="1" height="1" fill="#000"/><rect x="8" y="11" width="1" height="1" fill="#000"/><rect x="5" y="8" width="1" height="1" fill="#000"/><rect x="7" y="8" width="1" height="1" fill="#000"/></svg>
<div style="position:absolute;left:43px;top:249px;width:111px;height:25px;background:#E1E6EA;border:1px solid #316AC5"></div>
<div class="t" style="left:82px;top:256px;">Формы</div>
<svg style="left:56px;top:256px" width="14" height="13" viewBox="0 0 14 13"><rect x="1.5" y="1.5" width="12" height="11" fill="#444"/><rect x="0.5" y="0.5" width="12" height="11" fill="#fff" stroke="#000"/><rect x="0" y="0" width="13" height="2.5" fill="#000080"/><rect x="1.5" y="3.5" width="4" height="7" fill="#ddd"/><path d="M1.5 5.5 H5 M1.5 8.5 H5" stroke="#000" stroke-width="1"/><rect x="6.5" y="4.5" width="4" height="2" fill="none" stroke="#000"/><rect x="6.5" y="7.5" width="4" height="2" fill="none" stroke="#000"/></svg>
<div class="t" style="left:82px;top:281px;">Отчеты</div>
<svg style="left:54px;top:280px" width="14" height="14" viewBox="0 0 14 14"><rect x="3" y="1" width="10" height="12" fill="#333"/><rect x="2.5" y="0.5" width="9" height="11" fill="#008080" stroke="#000"/><rect x="4.5" y="2.5" width="5" height="2" fill="#fff" stroke="#000" stroke-width="0.6"/><circle cx="1" cy="1.5" r="0.8" fill="#fff" stroke="#000" stroke-width="0.5"/><circle cx="1" cy="3.7" r="0.8" fill="#fff" stroke="#000" stroke-width="0.5"/><circle cx="1" cy="5.9" r="0.8" fill="#fff" stroke="#000" stroke-width="0.5"/><circle cx="1" cy="8.1" r="0.8" fill="#fff" stroke="#000" stroke-width="0.5"/><circle cx="1" cy="10.3" r="0.8" fill="#fff" stroke="#000" stroke-width="0.5"/></svg>
<div class="t" style="left:82px;top:306px;">Страницы</div>
<svg style="left:55px;top:303px" width="14" height="16" viewBox="0 0 14 16"><path d="M4.5 1.5 H11 L13.5 4 V15.5 H4.5Z" fill="#333"/><path d="M3.5 0.5 H10 L12.5 3 V14.5 H3.5Z" fill="#fff" stroke="#000"/><rect x="5.5" y="8.5" width="6" height="4" fill="#000"/><path d="M6.5 9.5 H7 M8.3 9.5 H8.8 M10 9.5 H10.5 M6.5 11.5 H7 M8.3 11.5 H8.8 M10 11.5 H10.5" stroke="#fff"/><circle cx="3" cy="3.5" r="3" fill="#1C6FD0" stroke="#000" stroke-width="0.5"/><path d="M1.5 2.5 Q3 1 4 3 Q3 5 2 5" fill="#2A9A2A"/></svg>
<div class="t" style="left:82px;top:331px;">Макросы</div>
<svg style="left:54px;top:330px" width="13" height="13" viewBox="0 0 13 13"><path d="M2 1 H11 Q12 1 11 3 L6 11 H1 Q0 11 1 9Z" fill="#F5F050" stroke="#000"/><path d="M2.5 2 H10" stroke="#fff"/><path d="M6 11 H11 Q12 11 11.5 12.5 H5" fill="#fff" stroke="#000" stroke-width="0.8"/><path d="M4 6 L7 3 M3 8 L8 4" stroke="#fff" stroke-width="0.8"/></svg>
<div class="t" style="left:82px;top:356px;">Модули</div>
<svg style="left:52px;top:355px" width="16" height="15" viewBox="0 0 16 15"><path d="M2 8 L11 1 M6 6 L13 10 M7 9 L9 13" stroke="#000" stroke-width="1"/><rect x="1" y="6.7" width="4" height="2.6" transform="rotate(-40 3 8)" fill="#E020C0" stroke="#000" stroke-width="0.9"/><rect x="5.5" y="2.2" width="4" height="2.6" transform="rotate(-40 7.5 3.5)" fill="#F0E000" stroke="#000" stroke-width="0.9"/><rect x="9.5" y="0.5" width="4" height="2.6" transform="rotate(-40 11.5 1.8)" fill="#E020C0" stroke="#000" stroke-width="0.9"/><rect x="5" y="6.7" width="4" height="2.6" transform="rotate(-40 7 8)" fill="#20C020" stroke="#000" stroke-width="0.9"/><rect x="10.5" y="7.7" width="4" height="2.6" transform="rotate(-40 12.5 9)" fill="#20C0D0" stroke="#000" stroke-width="0.9"/><rect x="7" y="11.2" width="4" height="2.6" transform="rotate(-40 9 12.5)" fill="#F0E000" stroke="#000" stroke-width="0.9"/></svg>
<div style="position:absolute;left:42px;top:380px;width:111px;height:1px;background:#ACA899"></div>
<div style="position:absolute;left:42px;top:399px;width:111px;height:1px;background:#ACA899"></div>
<div class="t" style="left:77px;top:384px;">Группы</div>
<svg style="left:55px;top:406px" width="14" height="13" viewBox="0 0 14 13"><path d="M0.5 2.5 H4 L5 1 H9 L10 2.5 H12.5 V11.5 H0.5Z" fill="#F5EE60" stroke="#000"/><rect x="1.5" y="11.5" width="12" height="1.2" fill="#555"/><path d="M6.5 4 V10 M3.5 7 H9.5 M4.4 4.9 L8.6 9.1 M8.6 4.9 L4.4 9.1" stroke="#1010E0" stroke-width="1.2"/></svg>
<div class="t" style="left:82px;top:408px;">Избранное</div>
<div style="position:absolute;left:160px;top:178px;width:342px;height:273px;background:#fff;border:1px solid #ACA899"></div>
<svg style="left:166px;top:181px" width="15" height="16" viewBox="0 0 15 16"><path d="M3.5 1.5 H14.5 V15.5 H3.5Z" fill="#444"/><path d="M2.5 0.5 H13.5 V14.5 H2.5Z" fill="#fff" stroke="#000" stroke-width="0.6"/><rect x="3" y="0" width="10.5" height="2" fill="#F0F000"/><path d="M3 13.5 H13" stroke="#999" stroke-dasharray="1 0.6"/><rect x="0.5" y="2.5" width="9" height="9" fill="#fff" stroke="#800040" stroke-dasharray="1 0.5"/><path d="M2.5 9.5 L5.5 6.5" stroke="#800040" stroke-width="1.8"/><circle cx="6.5" cy="5.5" r="1.8" fill="#800040"/><circle cx="7" cy="5" r="0.5" fill="#fff"/></svg>
<div class="t" style="left:195px;top:184px;">Создание формы в режиме конструктора</div>
<svg style="left:166px;top:201px" width="15" height="16" viewBox="0 0 15 16"><path d="M3.5 1.5 H14.5 V15.5 H3.5Z" fill="#444"/><path d="M2.5 0.5 H13.5 V14.5 H2.5Z" fill="#fff" stroke="#000" stroke-width="0.6"/><rect x="3" y="0" width="10.5" height="2" fill="#F0F000"/><path d="M3 13.5 H13" stroke="#999" stroke-dasharray="1 0.6"/><rect x="0.5" y="2.5" width="9" height="9" fill="#fff" stroke="#800040" stroke-dasharray="1 0.5"/><path d="M2.5 9.5 L5.5 6.5" stroke="#800040" stroke-width="1.8"/><circle cx="6.5" cy="5.5" r="1.8" fill="#800040"/><circle cx="7" cy="5" r="0.5" fill="#fff"/></svg>
<div class="t" style="left:195px;top:204px;">Создание формы с помощью мастера</div>
<svg style="left:168px;top:223px" width="14" height="13" viewBox="0 0 14 13"><rect x="1.5" y="1.5" width="12" height="11" fill="#444"/><rect x="0.5" y="0.5" width="12" height="11" fill="#fff" stroke="#000"/><rect x="0" y="0" width="13" height="2.5" fill="#000080"/><rect x="1.5" y="3.5" width="4" height="7" fill="#ddd"/><path d="M1.5 5.5 H5 M1.5 8.5 H5" stroke="#000" stroke-width="1"/><rect x="6.5" y="4.5" width="4" height="2" fill="none" stroke="#000"/><rect x="6.5" y="7.5" width="4" height="2" fill="none" stroke="#000"/></svg>
<div class="t" style="left:195px;top:224px;">Авторы</div>
<svg style="left:168px;top:243px" width="14" height="13" viewBox="0 0 14 13"><rect x="1.5" y="1.5" width="12" height="11" fill="#444"/><rect x="0.5" y="0.5" width="12" height="11" fill="#fff" stroke="#000"/><rect x="0" y="0" width="13" height="2.5" fill="#000080"/><rect x="1.5" y="3.5" width="4" height="7" fill="#ddd"/><path d="M1.5 5.5 H5 M1.5 8.5 H5" stroke="#000" stroke-width="1"/><rect x="6.5" y="4.5" width="4" height="2" fill="none" stroke="#000"/><rect x="6.5" y="7.5" width="4" height="2" fill="none" stroke="#000"/></svg>
<div class="t" style="left:195px;top:244px;">Авторы книги</div>
<svg style="left:168px;top:263px" width="14" height="13" viewBox="0 0 14 13"><rect x="1.5" y="1.5" width="12" height="11" fill="#444"/><rect x="0.5" y="0.5" width="12" height="11" fill="#fff" stroke="#000"/><rect x="0" y="0" width="13" height="2.5" fill="#000080"/><rect x="1.5" y="3.5" width="4" height="7" fill="#ddd"/><path d="M1.5 5.5 H5 M1.5 8.5 H5" stroke="#000" stroke-width="1"/><rect x="6.5" y="4.5" width="4" height="2" fill="none" stroke="#000"/><rect x="6.5" y="7.5" width="4" height="2" fill="none" stroke="#000"/></svg>
<div class="t" style="left:195px;top:264px;">Города</div>
<svg style="left:168px;top:283px" width="14" height="13" viewBox="0 0 14 13"><rect x="1.5" y="1.5" width="12" height="11" fill="#444"/><rect x="0.5" y="0.5" width="12" height="11" fill="#fff" stroke="#000"/><rect x="0" y="0" width="13" height="2.5" fill="#000080"/><rect x="1.5" y="3.5" width="4" height="7" fill="#ddd"/><path d="M1.5 5.5 H5 M1.5 8.5 H5" stroke="#000" stroke-width="1"/><rect x="6.5" y="4.5" width="4" height="2" fill="none" stroke="#000"/><rect x="6.5" y="7.5" width="4" height="2" fill="none" stroke="#000"/></svg>
<div class="t" style="left:195px;top:284px;">Издательства</div>
<div style="position:absolute;left:194px;top:300px;width:60px;height:18px;background:#ECE9D8"></div>
<svg style="left:168px;top:303px" width="14" height="13" viewBox="0 0 14 13"><rect x="1.5" y="1.5" width="12" height="11" fill="#444"/><rect x="0.5" y="0.5" width="12" height="11" fill="#fff" stroke="#000"/><rect x="0" y="0" width="13" height="2.5" fill="#000080"/><rect x="1.5" y="3.5" width="4" height="7" fill="#ddd"/><path d="M1.5 5.5 H5 M1.5 8.5 H5" stroke="#000" stroke-width="1"/><rect x="6.5" y="4.5" width="4" height="2" fill="none" stroke="#000"/><rect x="6.5" y="7.5" width="4" height="2" fill="none" stroke="#000"/></svg>
<div class="t" style="left:195px;top:304px;">Информация о книге</div>
<div style="position:absolute;left:208px;top:211px;width:674px;height:289px;background:#0A4EE4;border:1px solid #0030B8;border-top:none;border-radius:7px 7px 0 0"></div>
<div style="position:absolute;left:208px;top:211px;width:674px;height:30px;background:linear-gradient(#0A48D8 0,#3D95FF 1.5px,#2A82FC 2.5px,#0A62EC 4.5px,#0054E0 11px,#0056E4 15px,#0060F4 20px,#0064FC 26px,#0050E0 28px,#0032C4 30px);border-radius:7px 7px 0 0"></div>
<div style="position:absolute;left:212px;top:241px;width:667px;height:255px;background:#ECE9D8"></div>
<svg style="left:215px;top:221px" width="13" height="12" viewBox="0 0 13 12"><rect x="0" y="0" width="13" height="12" fill="#000"/><rect x="0" y="0" width="13" height="1" fill="#000080"/><rect x="1" y="2" width="11" height="9" fill="#fff"/><path d="M1.5 3 V11 M3.5 3 V11" stroke="#C8C8C8" stroke-dasharray="1 1"/><path d="M2 4.5 H5 M2 7.5 H5" stroke="#000"/><rect x="6.5" y="3.5" width="4" height="2" fill="none" stroke="#000"/><rect x="6.5" y="7.5" width="4" height="2" fill="none" stroke="#000"/></svg>
<div class="t" style="left:233px;top:220px;font-size:13.5px;font-weight:bold;color:#fff;line-height:16px;letter-spacing:-0.3px;text-shadow:1px 1px 0 #0A2A8A">Информация о книге</div>
<div class="xpbtn" style="left:810px;top:217px;background:radial-gradient(circle at 30% 25%,#8FB4FF 0,#3C74F2 45%,#2A5FE8 80%,#1D4FD8 100%);border-color:#fff"><div class="a" style="left:4px;top:12px;width:7px;height:3px;background:#fff"></div></div><div class="xpbtn" style="left:833px;top:217px;background:radial-gradient(circle at 30% 25%,#8FB4FF 0,#3C74F2 45%,#2A5FE8 80%,#1D4FD8 100%);border-color:#fff"><div class="a" style="left:4px;top:3px;width:11px;height:11px;border:1px solid #fff;border-top-width:3px"></div></div><div class="xpbtn" style="left:856px;top:217px;background:radial-gradient(circle at 30% 25%,#F0A287 0,#E2613B 45%,#D24A22 80%,#C23A18 100%);border-color:#fff"><svg style="left:4px;top:4px" width="11" height="11" viewBox="0 0 11 11"><path d="M1 1 L10 10 M10 1 L1 10" stroke="#fff" stroke-width="2"/></svg></div>
<div style="position:absolute;left:212px;top:241px;width:649px;height:235px;background:#E3DFBD;border-top:1px solid #8E8A78"></div>
<div style="position:absolute;left:213px;top:270px;width:19px;height:206px;background:#ECE9D8;border-right:1px solid #000"></div>
<div style="position:absolute;left:213px;top:269px;width:647px;height:1px;background:#000"></div>
<svg style="left:222px;top:273px" width="6" height="10" viewBox="0 0 6 10"><path d="M0 0 L6 5 L0 10Z" fill="#000"/></svg>
<div class="t" style="left:248px;top:248px;font-family:'Liberation Serif';font-weight:bold;font-size:13.5px;color:#993300;line-height:15px;letter-spacing:-0.35px">Шифр</div>
<div class="t" style="left:376px;top:248px;font-family:'Liberation Serif';font-weight:bold;font-size:13.5px;color:#993300;line-height:15px;letter-spacing:-0.35px">Название</div>
<div class="t" style="left:553px;top:248px;font-family:'Liberation Serif';font-weight:bold;font-size:13.5px;color:#993300;line-height:15px;letter-spacing:-0.35px">Издательство</div>
<div class="t" style="left:665px;top:248px;font-family:'Liberation Serif';font-weight:bold;font-size:13.5px;color:#993300;line-height:15px;letter-spacing:-0.35px">Год издания</div>
<div class="t" style="left:761px;top:248px;font-family:'Liberation Serif';font-weight:bold;font-size:13.5px;color:#993300;line-height:15px;letter-spacing:-0.35px">Цена</div>
<div class="t" style="left:820px;top:248px;font-family:'Liberation Serif';font-weight:bold;font-size:13.5px;color:#993300;line-height:15px;letter-spacing:-0.35px">Кол.</div>
<div style="position:absolute;left:236px;top:273px;width:50px;height:20px;background:#fff;border:1px solid #993300"></div>
<div class="t" style="left:236px;top:275px;width:48px;text-align:right;font-size:12px;line-height:14px;letter-spacing:0.15px">&nbsp;</div>
<div style="position:absolute;left:279px;top:274px;width:5px;height:15px;background:#000"></div>
<div style="position:absolute;left:280px;top:277px;width:1px;height:2px;background:#fff"></div>
<div style="position:absolute;left:281px;top:276px;width:1px;height:11px;background:#fff"></div>
<div style="position:absolute;left:289px;top:273px;width:224px;height:20px;background:#fff;border:1px solid #993300"></div>
<div class="t" style="left:291px;top:275px;font-size:12px;line-height:14px;letter-spacing:0.15px">Новые информационные технологии</div>
<div style="position:absolute;left:527px;top:273px;width:129px;height:20px;background:#fff;border:1px solid #993300"></div>
<div class="t" style="left:529px;top:275px;font-size:12px;line-height:14px;letter-spacing:0.15px">Эко</div>
<div style="position:absolute;left:638px;top:274px;width:17px;height:18px;background:#ECE9D8;border-right:1px solid #000;border-bottom:1px solid #000"></div>
<svg style="left:644px;top:281px" width="5" height="3" viewBox="0 0 5 3"><path d="M0 0 H5 L2.5 3Z" fill="#000"/></svg>
<div style="position:absolute;left:667px;top:273px;width:66px;height:20px;background:#fff;border:1px solid #993300"></div>
<div class="t" style="left:667px;top:275px;width:63px;text-align:right;font-size:12px;line-height:14px;letter-spacing:0.15px">2007</div>
<div style="position:absolute;left:741px;top:273px;width:69px;height:20px;background:#fff;border:1px solid #993300"></div>
<div class="t" style="left:741px;top:275px;width:66px;text-align:right;font-size:12px;line-height:14px;letter-spacing:0.15px">580,00р.</div>
<div style="position:absolute;left:813px;top:273px;width:39px;height:20px;background:#fff;border:1px solid #993300"></div>
<div class="t" style="left:813px;top:275px;width:36px;text-align:right;font-size:12px;line-height:14px;letter-spacing:0.15px">250</div>
<div style="position:absolute;left:860px;top:242px;width:17px;height:234px;background:repeating-conic-gradient(#F6F5F0 0 25%,#E9E7DC 0 50%) 0 0/2px 2px"></div>
<div style="position:absolute;left:860px;top:242px;width:17px;height:17px;background:#ECE9D8;border-left:1px solid #fff;border-top:1px solid #fff;box-shadow:inset -1px -1px 0 #716F64, inset -2px -2px 0 #ACA899"></div>
<svg style="left:865px;top:249px" width="7" height="4" viewBox="0 0 7 4"><path d="M0 4 H7 L3.5 0Z" fill="#000"/></svg>
<div style="position:absolute;left:860px;top:259px;width:17px;height:177px;background:#ECE9D8;border-left:1px solid #fff;border-top:1px solid #fff;box-shadow:inset -1px -1px 0 #716F64, inset -2px -2px 0 #ACA899"></div>
<div style="position:absolute;left:860px;top:460px;width:17px;height:16px;background:#ECE9D8;border-left:1px solid #fff;border-top:1px solid #fff;box-shadow:inset -1px -1px 0 #716F64, inset -2px -2px 0 #ACA899"></div>
<svg style="left:865px;top:466px" width="7" height="4" viewBox="0 0 7 4"><path d="M0 0 H7 L3.5 4Z" fill="#000"/></svg>
<div style="position:absolute;left:236px;top:330px;width:621px;height:146px;background:#E3DFBD;border:1px solid #993300;border-bottom:none"></div>
<div class="t" style="left:261px;top:335px;font-family:'Liberation Serif';font-weight:bold;font-size:13.5px;color:#993300;line-height:15px;letter-spacing:-0.35px;letter-spacing:-0.6px">Код записи</div>
<div class="t" style="left:377px;top:335px;font-family:'Liberation Serif';font-weight:bold;font-size:13.5px;color:#993300;line-height:15px;letter-spacing:-0.35px;letter-spacing:-0.6px">Фамилия автора</div>
<div style="position:absolute;left:237px;top:357px;width:602px;height:1px;background:#000"></div>
<div style="position:absolute;left:237px;top:383px;width:602px;height:1px;background:#000"></div>
<div style="position:absolute;left:237px;top:409px;width:602px;height:1px;background:#000"></div>
<div style="position:absolute;left:237px;top:435px;width:602px;height:1px;background:#000"></div>
<div style="position:absolute;left:237px;top:358px;width:19px;height:25px;background:#ECE9D8;border-right:1px solid #000;border-left:1px solid #fff;border-top:1px solid #fff"></div>
<div style="position:absolute;left:237px;top:384px;width:19px;height:25px;background:#ECE9D8;border-right:1px solid #000;border-left:1px solid #fff;border-top:1px solid #fff"></div>
<div style="position:absolute;left:237px;top:410px;width:19px;height:25px;background:#ECE9D8;border-right:1px solid #000;border-left:1px solid #fff;border-top:1px solid #fff"></div>
<svg style="left:245px;top:361px" width="6" height="10" viewBox="0 0 6 10"><path d="M0 0 L6 5 L0 10Z" fill="#000"/></svg>
<svg style="left:242px;top:413px" width="10" height="10" viewBox="0 0 10 10"><path d="M5 0 V9 M1 2.2 L9 6.8 M9 2.2 L1 6.8" stroke="#000" stroke-width="1.1"/></svg>
<div style="position:absolute;left:259px;top:361px;width:65px;height:19px;background:#fff;border:1px solid #993300"></div>
<div class="t" style="left:259px;top:363px;width:62px;text-align:right;font-size:12px;line-height:14px;letter-spacing:0.15px">1</div>
<div style="position:absolute;left:338px;top:361px;width:171px;height:20px;background:#fff;border:1px solid #993300"></div>
<div class="t" style="left:340px;top:363px;font-size:12px;line-height:14px;letter-spacing:0.15px">Багриновский</div>
<div style="position:absolute;left:491px;top:362px;width:17px;height:18px;background:#ECE9D8;border-right:1px solid #000;border-bottom:1px solid #000"></div>
<svg style="left:497px;top:369px" width="5" height="3" viewBox="0 0 5 3"><path d="M0 0 H5 L2.5 3Z" fill="#000"/></svg>
<div style="position:absolute;left:259px;top:387px;width:65px;height:19px;background:#fff;border:1px solid #993300"></div>
<div class="t" style="left:259px;top:389px;width:62px;text-align:right;font-size:12px;line-height:14px;letter-spacing:0.15px">2</div>
<div style="position:absolute;left:338px;top:387px;width:171px;height:20px;background:#fff;border:1px solid #993300"></div>
<div class="t" style="left:340px;top:389px;font-size:12px;line-height:14px;letter-spacing:0.15px">Хрусталев</div>
<div style="position:absolute;left:491px;top:388px;width:17px;height:18px;background:#ECE9D8;border-right:1px solid #000;border-bottom:1px solid #000"></div>
<svg style="left:497px;top:395px" width="5" height="3" viewBox="0 0 5 3"><path d="M0 0 H5 L2.5 3Z" fill="#000"/></svg>
<div style="position:absolute;left:259px;top:413px;width:65px;height:19px;background:#fff;border:1px solid #993300"></div>
<div class="t" style="left:259px;top:415px;width:62px;text-align:right;font-size:12px;line-height:14px;letter-spacing:0.15px">(Счетчик)</div>
<div style="position:absolute;left:338px;top:413px;width:171px;height:20px;background:#fff;border:1px solid #993300"></div>
<div class="t" style="left:340px;top:415px;font-size:12px;line-height:14px;letter-spacing:0.15px"></div>
<div style="position:absolute;left:491px;top:414px;width:17px;height:18px;background:#ECE9D8;border-right:1px solid #000;border-bottom:1px solid #000"></div>
<svg style="left:497px;top:421px" width="5" height="3" viewBox="0 0 5 3"><path d="M0 0 H5 L2.5 3Z" fill="#000"/></svg>
<div style="position:absolute;left:839px;top:331px;width:17px;height:145px;background:#ECE9D8"></div>
<div style="position:absolute;left:839px;top:331px;width:17px;height:17px;background:#ECE9D8;border-left:1px solid #fff;border-top:1px solid #fff;box-shadow:inset -1px -1px 0 #716F64, inset -2px -2px 0 #ACA899"></div>
<svg style="left:844px;top:338px" width="7" height="4" viewBox="0 0 7 4"><path d="M0 4 H7 L3.5 0Z" fill="#000"/></svg>
<div style="position:absolute;left:839px;top:348px;width:17px;height:111px;background:#ECE9D8;border-left:1px solid #fff;border-top:1px solid #fff;box-shadow:inset -1px -1px 0 #716F64, inset -2px -2px 0 #ACA899"></div>
<div style="position:absolute;left:839px;top:459px;width:17px;height:17px;background:#ECE9D8;border-left:1px solid #fff;border-top:1px solid #fff;box-shadow:inset -1px -1px 0 #716F64, inset -2px -2px 0 #ACA899"></div>
<svg style="left:844px;top:466px" width="7" height="4" viewBox="0 0 7 4"><path d="M0 0 H7 L3.5 4Z" fill="#000"/></svg>
<div class="t" style="left:220px;top:481px;">Запись:</div>
<div style="position:absolute;left:264px;top:478px;width:23px;height:16px;background:#ECE9D8;border:1px solid;border-color:#fff #404040 #404040 #fff"></div>
<div style="position:absolute;left:286px;top:478px;width:23px;height:16px;background:#ECE9D8;border:1px solid;border-color:#fff #404040 #404040 #fff"></div>
<div style="position:absolute;left:382px;top:478px;width:23px;height:16px;background:#ECE9D8;border:1px solid;border-color:#fff #404040 #404040 #fff"></div>
<div style="position:absolute;left:404px;top:478px;width:23px;height:16px;background:#ECE9D8;border:1px solid;border-color:#fff #404040 #404040 #fff"></div>
<div style="position:absolute;left:427px;top:478px;width:23px;height:16px;background:#ECE9D8;border:1px solid;border-color:#fff #404040 #404040 #fff"></div>
<svg style="left:270px;top:482px" width="10" height="9" viewBox="0 0 10 9"><rect x="0" y="0" width="2" height="9" fill="#000"/><path d="M9 0 V9 L3 4.5Z" fill="#000"/></svg>
<svg style="left:294px;top:482px" width="6" height="9" viewBox="0 0 6 9"><path d="M6 0 V9 L0 4.5Z" fill="#A9A596"/></svg>
<div style="position:absolute;left:315px;top:478px;width:63px;height:16px;background:#fff;border-top:2px solid #404040;border-left:2px solid #404040"></div>
<div class="t" style="left:315px;top:481px;width:60px;text-align:right">1</div>
<svg style="left:391px;top:482px" width="5" height="9" viewBox="0 0 5 9"><path d="M0 0 V9 L5 4.5Z" fill="#000"/></svg>
<svg style="left:411px;top:482px" width="9" height="9" viewBox="0 0 9 9"><path d="M0 0 V9 L6 4.5Z" fill="#000"/><rect x="7" y="0" width="2" height="9" fill="#000"/></svg>
<svg style="left:430px;top:482px" width="18" height="9" viewBox="0 0 18 9"><path d="M0 0 V9 L5 4.5Z" fill="#000"/><path d="M11 0 V9 M6.5 4.5 H15.5 M8 1.5 L14 7.5 M14 1.5 L8 7.5" stroke="#000" stroke-width="1.2"/></svg>
<div class="t" style="left:456px;top:481px;">из&nbsp; 3</div>
<div style="position:absolute;left:930px;top:450px;width:505px;height:378px;background:#7B8FE0;border-radius:7px 7px 0 0"></div>
<div style="position:absolute;left:931px;top:451px;width:503px;height:29px;background:linear-gradient(#7088DC 0,#A6BAEE 1px,#9CB2EA 2.5px,#7E98E0 5px,#7893DE 12px,#7C9CE4 20px,#86A8EC 24px,#84A4EA 26.5px,#6C82DA 29px);border-radius:6px 6px 0 0"></div>
<div style="position:absolute;left:934px;top:480px;width:497px;height:344px;background:#ECE9D8"></div>
<svg style="left:935px;top:458px" width="17" height="16" viewBox="0 0 17 16"><defs><pattern id="pk2" width="2" height="2" patternUnits="userSpaceOnUse"><rect width="2" height="2" fill="#fff"/><rect width="1" height="1" fill="#000"/><rect x="1" y="1" width="1" height="1" fill="#000"/></pattern></defs><rect x="0.5" y="4.5" width="11" height="10" fill="#fff" stroke="#000" stroke-width="1.2"/><path d="M2 10.5 H4 M5 10.5 H10 M2 12.5 H4 M5 12.5 H10" stroke="#000"/><path d="M2 6 L7 1 L11 5 L6 10 Z" fill="url(#pk2)"/><rect x="7" y="1" width="6" height="5" fill="#C8C8C8"/><path d="M7 1.5 H12 M8 5.5 H12" stroke="#000"/><path d="M14 1 H16 V8 L15 9 L14 7Z" fill="#000080"/></svg>
<div class="t" style="left:955px;top:460px;font-size:13px;font-weight:bold;color:#D8E2F8;line-height:15px;letter-spacing:0.1px">Поле: Шифр книги</div>
<div class="xpbtn" style="left:1408px;top:456px;background:radial-gradient(circle at 30% 25%,#C7909C 0,#B86B7A 50%,#AD5D6C 100%);border-color:#C9D4F5"><svg style="left:4px;top:4px" width="11" height="11" viewBox="0 0 11 11"><path d="M1 1 L10 10 M10 1 L1 10" stroke="#fff" stroke-width="2"/></svg></div>
<div style="position:absolute;left:934px;top:500px;width:497px;height:1px;background:#fff"></div>
<div style="position:absolute;left:937px;top:483px;width:56px;height:17px;background:#ECE9D8;border-left:1px solid #fff;border-top:1px solid #fff;border-right:2px solid #8E8A78;border-top-left-radius:2px"></div>
<div class="t" style="left:937px;top:486px;width:56px;text-align:center">Макет</div>
<div style="position:absolute;left:994px;top:483px;width:55px;height:17px;background:#ECE9D8;border-left:1px solid #fff;border-top:1px solid #fff;border-right:2px solid #8E8A78;border-top-left-radius:2px"></div>
<div class="t" style="left:994px;top:486px;width:55px;text-align:center">Данные</div>
<div style="position:absolute;left:1050px;top:483px;width:56px;height:17px;background:#ECE9D8;border-left:1px solid #fff;border-top:1px solid #fff;border-right:2px solid #8E8A78;border-top-left-radius:2px"></div>
<div class="t" style="left:1050px;top:486px;width:56px;text-align:center">События</div>
<div style="position:absolute;left:1107px;top:483px;width:56px;height:17px;background:#ECE9D8;border-left:1px solid #fff;border-top:1px solid #fff;border-right:2px solid #8E8A78;border-top-left-radius:2px"></div>
<div class="t" style="left:1107px;top:486px;width:56px;text-align:center">Другие</div>
<div style="position:absolute;left:1163px;top:481px;width:61px;height:20px;background:#ECE9D8;border-left:1px solid #fff;border-top:1px solid #fff;border-right:2px solid #8E8A78"></div>
<div class="t" style="left:1163px;top:484px;width:58px;text-align:center">Все</div>
<div style="position:absolute;left:1163px;top:500px;width:60px;height:2px;background:#ECE9D8"></div>
<div style="position:absolute;left:934px;top:501px;width:476px;height:322px;background:#ECE9D8"></div>
<div style="position:absolute;left:1410px;top:501px;width:17px;height:322px;background:linear-gradient(90deg,#F3F1EC,#FEFEFB)"></div>
<svg style="left:934px;top:501px" width="180" height="322" viewBox="0 0 180 322"><rect x="13.00" y="11" width="1.3" height="1.7" fill="#333"/><rect x="19.67" y="11" width="1.3" height="1.7" fill="#333"/><rect x="26.35" y="11" width="1.3" height="1.7" fill="#333"/><rect x="33.02" y="11" width="1.3" height="1.7" fill="#333"/><rect x="39.70" y="11" width="1.3" height="1.7" fill="#333"/><rect x="46.38" y="11" width="1.3" height="1.7" fill="#333"/><rect x="53.05" y="11" width="1.3" height="1.7" fill="#333"/><rect x="59.73" y="11" width="1.3" height="1.7" fill="#333"/><rect x="66.40" y="11" width="1.3" height="1.7" fill="#333"/><rect x="73.08" y="11" width="1.3" height="1.7" fill="#333"/><rect x="79.75" y="11" width="1.3" height="1.7" fill="#333"/><rect x="86.42" y="11" width="1.3" height="1.7" fill="#333"/><rect x="93.10" y="11" width="1.3" height="1.7" fill="#333"/><rect x="99.78" y="11" width="1.3" height="1.7" fill="#333"/><rect x="106.45" y="11" width="1.3" height="1.7" fill="#333"/><rect x="113.12" y="11" width="1.3" height="1.7" fill="#333"/><rect x="119.80" y="11" width="1.3" height="1.7" fill="#333"/><rect x="126.47" y="11" width="1.3" height="1.7" fill="#333"/><rect x="133.15" y="11" width="1.3" height="1.7" fill="#333"/><rect x="139.83" y="11" width="1.3" height="1.7" fill="#333"/><rect x="146.50" y="11" width="1.3" height="1.7" fill="#333"/><rect x="153.17" y="11" width="1.3" height="1.7" fill="#333"/><rect x="159.85" y="11" width="1.3" height="1.7" fill="#333"/><rect x="166.53" y="11" width="1.3" height="1.7" fill="#333"/><rect x="13.00" y="26" width="1.3" height="1.7" fill="#333"/><rect x="19.67" y="26" width="1.3" height="1.7" fill="#333"/><rect x="26.35" y="26" width="1.3" height="1.7" fill="#333"/><rect x="33.02" y="26" width="1.3" height="1.7" fill="#333"/><rect x="39.70" y="26" width="1.3" height="1.7" fill="#333"/><rect x="46.38" y="26" width="1.3" height="1.7" fill="#333"/><rect x="53.05" y="26" width="1.3" height="1.7" fill="#333"/><rect x="59.73" y="26" width="1.3" height="1.7" fill="#333"/><rect x="66.40" y="26" width="1.3" height="1.7" fill="#333"/><rect x="73.08" y="26" width="1.3" height="1.7" fill="#333"/><rect x="79.75" y="26" width="1.3" height="1.7" fill="#333"/><rect x="86.42" y="26" width="1.3" height="1.7" fill="#333"/><rect x="93.10" y="26" width="1.3" height="1.7" fill="#333"/><rect x="99.78" y="26" width="1.3" height="1.7" fill="#333"/><rect x="106.45" y="26" width="1.3" height="1.7" fill="#333"/><rect x="113.12" y="26" width="1.3" height="1.7" fill="#333"/><rect x="119.80" y="26" width="1.3" height="1.7" fill="#333"/><rect x="126.47" y="26" width="1.3" height="1.7" fill="#333"/><rect x="133.15" y="26" width="1.3" height="1.7" fill="#333"/><rect x="139.83" y="26" width="1.3" height="1.7" fill="#333"/><rect x="146.50" y="26" width="1.3" height="1.7" fill="#333"/><rect x="153.17" y="26" width="1.3" height="1.7" fill="#333"/><rect x="159.85" y="26" width="1.3" height="1.7" fill="#333"/><rect x="166.53" y="26" width="1.3" height="1.7" fill="#333"/><rect x="13.00" y="41" width="1.3" height="1.7" fill="#333"/><rect x="19.67" y="41" width="1.3" height="1.7" fill="#333"/><rect x="26.35" y="41" width="1.3" height="1.7" fill="#333"/><rect x="33.02" y="41" width="1.3" height="1.7" fill="#333"/><rect x="39.70" y="41" width="1.3" height="1.7" fill="#333"/><rect x="46.38" y="41" width="1.3" height="1.7" fill="#333"/><rect x="53.05" y="41" width="1.3" height="1.7" fill="#333"/><rect x="59.73" y="41" width="1.3" height="1.7" fill="#333"/><rect x="66.40" y="41" width="1.3" height="1.7" fill="#333"/><rect x="73.08" y="41" width="1.3" height="1.7" fill="#333"/><rect x="79.75" y="41" width="1.3" height="1.7" fill="#333"/><rect x="86.42" y="41" width="1.3" height="1.7" fill="#333"/><rect x="93.10" y="41" width="1.3" height="1.7" fill="#333"/><rect x="99.78" y="41" width="1.3" height="1.7" fill="#333"/><rect x="106.45" y="41" width="1.3" height="1.7" fill="#333"/><rect x="113.12" y="41" width="1.3" height="1.7" fill="#333"/><rect x="119.80" y="41" width="1.3" height="1.7" fill="#333"/><rect x="126.47" y="41" width="1.3" height="1.7" fill="#333"/><rect x="133.15" y="41" width="1.3" height="1.7" fill="#333"/><rect x="139.83" y="41" width="1.3" height="1.7" fill="#333"/><rect x="146.50" y="41" width="1.3" height="1.7" fill="#333"/><rect x="153.17" y="41" width="1.3" height="1.7" fill="#333"/><rect x="159.85" y="41" width="1.3" height="1.7" fill="#333"/><rect x="166.53" y="41" width="1.3" height="1.7" fill="#333"/><rect x="13.00" y="56" width="1.3" height="1.7" fill="#333"/><rect x="19.67" y="56" width="1.3" height="1.7" fill="#333"/><rect x="26.35" y="56" width="1.3" height="1.7" fill="#333"/><rect x="33.02" y="56" width="1.3" height="1.7" fill="#333"/><rect x="39.70" y="56" width="1.3" height="1.7" fill="#333"/><rect x="46.38" y="56" width="1.3" height="1.7" fill="#333"/><rect x="53.05" y="56" width="1.3" height="1.7" fill="#333"/><rect x="59.73" y="56" width="1.3" height="1.7" fill="#333"/><rect x="66.40" y="56" width="1.3" height="1.7" fill="#333"/><rect x="73.08" y="56" width="1.3" height="1.7" fill="#333"/><rect x="79.75" y="56" width="1.3" height="1.7" fill="#333"/><rect x="86.42" y="56" width="1.3" height="1.7" fill="#333"/><rect x="93.10" y="56" width="1.3" height="1.7" fill="#333"/><rect x="99.78" y="56" width="1.3" height="1.7" fill="#333"/><rect x="106.45" y="56" width="1.3" height="1.7" fill="#333"/><rect x="113.12" y="56" width="1.3" height="1.7" fill="#333"/><rect x="119.80" y="56" width="1.3" height="1.7" fill="#333"/><rect x="126.47" y="56" width="1.3" height="1.7" fill="#333"/><rect x="133.15" y="56" width="1.3" height="1.7" fill="#333"/><rect x="139.83" y="56" width="1.3" height="1.7" fill="#333"/><rect x="146.50" y="56" width="1.3" height="1.7" fill="#333"/><rect x="153.17" y="56" width="1.3" height="1.7" fill="#333"/><rect x="159.85" y="56" width="1.3" height="1.7" fill="#333"/><rect x="166.53" y="56" width="1.3" height="1.7" fill="#333"/><rect x="13.00" y="71" width="1.3" height="1.7" fill="#333"/><rect x="19.67" y="71" width="1.3" height="1.7" fill="#333"/><rect x="26.35" y="71" width="1.3" height="1.7" fill="#333"/><rect x="33.02" y="71" width="1.3" height="1.7" fill="#333"/><rect x="39.70" y="71" width="1.3" height="1.7" fill="#333"/><rect x="46.38" y="71" width="1.3" height="1.7" fill="#333"/><rect x="53.05" y="71" width="1.3" height="1.7" fill="#333"/><rect x="59.73" y="71" width="1.3" height="1.7" fill="#333"/><rect x="66.40" y="71" width="1.3" height="1.7" fill="#333"/><rect x="73.08" y="71" width="1.3" height="1.7" fill="#333"/><rect x="79.75" y="71" width="1.3" height="1.7" fill="#333"/><rect x="86.42" y="71" width="1.3" height="1.7" fill="#333"/><rect x="93.10" y="71" width="1.3" height="1.7" fill="#333"/><rect x="99.78" y="71" width="1.3" height="1.7" fill="#333"/><rect x="106.45" y="71" width="1.3" height="1.7" fill="#333"/><rect x="113.12" y="71" width="1.3" height="1.7" fill="#333"/><rect x="119.80" y="71" width="1.3" height="1.7" fill="#333"/><rect x="126.47" y="71" width="1.3" height="1.7" fill="#333"/><rect x="133.15" y="71" width="1.3" height="1.7" fill="#333"/><rect x="139.83" y="71" width="1.3" height="1.7" fill="#333"/><rect x="146.50" y="71" width="1.3" height="1.7" fill="#333"/><rect x="153.17" y="71" width="1.3" height="1.7" fill="#333"/><rect x="159.85" y="71" width="1.3" height="1.7" fill="#333"/><rect x="166.53" y="71" width="1.3" height="1.7" fill="#333"/><rect x="13.00" y="86" width="1.3" height="1.7" fill="#333"/><rect x="19.67" y="86" width="1.3" height="1.7" fill="#333"/><rect x="26.35" y="86" width="1.3" height="1.7" fill="#333"/><rect x="33.02" y="86" width="1.3" height="1.7" fill="#333"/><rect x="39.70" y="86" width="1.3" height="1.7" fill="#333"/><rect x="46.38" y="86" width="1.3" height="1.7" fill="#333"/><rect x="53.05" y="86" width="1.3" height="1.7" fill="#333"/><rect x="59.73" y="86" width="1.3" height="1.7" fill="#333"/><rect x="66.40" y="86" width="1.3" height="1.7" fill="#333"/><rect x="73.08" y="86" width="1.3" height="1.7" fill="#333"/><rect x="79.75" y="86" width="1.3" height="1.7" fill="#333"/><rect x="86.42" y="86" width="1.3" height="1.7" fill="#333"/><rect x="93.10" y="86" width="1.3" height="1.7" fill="#333"/><rect x="99.78" y="86" width="1.3" height="1.7" fill="#333"/><rect x="106.45" y="86" width="1.3" height="1.7" fill="#333"/><rect x="113.12" y="86" width="1.3" height="1.7" fill="#333"/><rect x="119.80" y="86" width="1.3" height="1.7" fill="#333"/><rect x="126.47" y="86" width="1.3" height="1.7" fill="#333"/><rect x="133.15" y="86" width="1.3" height="1.7" fill="#333"/><rect x="139.83" y="86" width="1.3" height="1.7" fill="#333"/><rect x="146.50" y="86" width="1.3" height="1.7" fill="#333"/><rect x="153.17" y="86" width="1.3" height="1.7" fill="#333"/><rect x="159.85" y="86" width="1.3" height="1.7" fill="#333"/><rect x="166.53" y="86" width="1.3" height="1.7" fill="#333"/><rect x="13.00" y="101" width="1.3" height="1.7" fill="#333"/><rect x="19.67" y="101" width="1.3" height="1.7" fill="#333"/><rect x="26.35" y="101" width="1.3" height="1.7" fill="#333"/><rect x="33.02" y="101" width="1.3" height="1.7" fill="#333"/><rect x="39.70" y="101" width="1.3" height="1.7" fill="#333"/><rect x="46.38" y="101" width="1.3" height="1.7" fill="#333"/><rect x="53.05" y="101" width="1.3" height="1.7" fill="#333"/><rect x="59.73" y="101" width="1.3" height="1.7" fill="#333"/><rect x="66.40" y="101" width="1.3" height="1.7" fill="#333"/><rect x="73.08" y="101" width="1.3" height="1.7" fill="#333"/><rect x="79.75" y="101" width="1.3" height="1.7" fill="#333"/><rect x="86.42" y="101" width="1.3" height="1.7" fill="#333"/><rect x="93.10" y="101" width="1.3" height="1.7" fill="#333"/><rect x="99.78" y="101" width="1.3" height="1.7" fill="#333"/><rect x="106.45" y="101" width="1.3" height="1.7" fill="#333"/><rect x="113.12" y="101" width="1.3" height="1.7" fill="#333"/><rect x="119.80" y="101" width="1.3" height="1.7" fill="#333"/><rect x="126.47" y="101" width="1.3" height="1.7" fill="#333"/><rect x="133.15" y="101" width="1.3" height="1.7" fill="#333"/><rect x="139.83" y="101" width="1.3" height="1.7" fill="#333"/><rect x="146.50" y="101" width="1.3" height="1.7" fill="#333"/><rect x="153.17" y="101" width="1.3" height="1.7" fill="#333"/><rect x="159.85" y="101" width="1.3" height="1.7" fill="#333"/><rect x="166.53" y="101" width="1.3" height="1.7" fill="#333"/><rect x="13.00" y="116" width="1.3" height="1.7" fill="#333"/><rect x="19.67" y="116" width="1.3" height="1.7" fill="#333"/><rect x="26.35" y="116" width="1.3" height="1.7" fill="#333"/><rect x="33.02" y="116" width="1.3" height="1.7" fill="#333"/><rect x="39.70" y="116" width="1.3" height="1.7" fill="#333"/><rect x="46.38" y="116" width="1.3" height="1.7" fill="#333"/><rect x="53.05" y="116" width="1.3" height="1.7" fill="#333"/><rect x="59.73" y="116" width="1.3" height="1.7" fill="#333"/><rect x="66.40" y="116" width="1.3" height="1.7" fill="#333"/><rect x="73.08" y="116" width="1.3" height="1.7" fill="#333"/><rect x="79.75" y="116" width="1.3" height="1.7" fill="#333"/><rect x="86.42" y="116" width="1.3" height="1.7" fill="#333"/><rect x="93.10" y="116" width="1.3" height="1.7" fill="#333"/><rect x="99.78" y="116" width="1.3" height="1.7" fill="#333"/><rect x="106.45" y="116" width="1.3" height="1.7" fill="#333"/><rect x="113.12" y="116" width="1.3" height="1.7" fill="#333"/><rect x="119.80" y="116" width="1.3" height="1.7" fill="#333"/><rect x="126.47" y="116" width="1.3" height="1.7" fill="#333"/><rect x="133.15" y="116" width="1.3" height="1.7" fill="#333"/><rect x="139.83" y="116" width="1.3" height="1.7" fill="#333"/><rect x="146.50" y="116" width="1.3" height="1.7" fill="#333"/><rect x="153.17" y="116" width="1.3" height="1.7" fill="#333"/><rect x="159.85" y="116" width="1.3" height="1.7" fill="#333"/><rect x="166.53" y="116" width="1.3" height="1.7" fill="#333"/><rect x="13.00" y="131" width="1.3" height="1.7" fill="#333"/><rect x="19.67" y="131" width="1.3" height="1.7" fill="#333"/><rect x="26.35" y="131" width="1.3" height="1.7" fill="#333"/><rect x="33.02" y="131" width="1.3" height="1.7" fill="#333"/><rect x="39.70" y="131" width="1.3" height="1.7" fill="#333"/><rect x="46.38" y="131" width="1.3" height="1.7" fill="#333"/><rect x="53.05" y="131" width="1.3" height="1.7" fill="#333"/><rect x="59.73" y="131" width="1.3" height="1.7" fill="#333"/><rect x="66.40" y="131" width="1.3" height="1.7" fill="#333"/><rect x="73.08" y="131" width="1.3" height="1.7" fill="#333"/><rect x="79.75" y="131" width="1.3" height="1.7" fill="#333"/><rect x="86.42" y="131" width="1.3" height="1.7" fill="#333"/><rect x="93.10" y="131" width="1.3" height="1.7" fill="#333"/><rect x="99.78" y="131" width="1.3" height="1.7" fill="#333"/><rect x="106.45" y="131" width="1.3" height="1.7" fill="#333"/><rect x="113.12" y="131" width="1.3" height="1.7" fill="#333"/><rect x="119.80" y="131" width="1.3" height="1.7" fill="#333"/><rect x="126.47" y="131" width="1.3" height="1.7" fill="#333"/><rect x="133.15" y="131" width="1.3" height="1.7" fill="#333"/><rect x="139.83" y="131" width="1.3" height="1.7" fill="#333"/><rect x="146.50" y="131" width="1.3" height="1.7" fill="#333"/><rect x="153.17" y="131" width="1.3" height="1.7" fill="#333"/><rect x="159.85" y="131" width="1.3" height="1.7" fill="#333"/><rect x="166.53" y="131" width="1.3" height="1.7" fill="#333"/><rect x="13.00" y="146" width="1.3" height="1.7" fill="#333"/><rect x="19.67" y="146" width="1.3" height="1.7" fill="#333"/><rect x="26.35" y="146" width="1.3" height="1.7" fill="#333"/><rect x="33.02" y="146" width="1.3" height="1.7" fill="#333"/><rect x="39.70" y="146" width="1.3" height="1.7" fill="#333"/><rect x="46.38" y="146" width="1.3" height="1.7" fill="#333"/><rect x="53.05" y="146" width="1.3" height="1.7" fill="#333"/><rect x="59.73" y="146" width="1.3" height="1.7" fill="#333"/><rect x="66.40" y="146" width="1.3" height="1.7" fill="#333"/><rect x="73.08" y="146" width="1.3" height="1.7" fill="#333"/><rect x="79.75" y="146" width="1.3" height="1.7" fill="#333"/><rect x="86.42" y="146" width="1.3" height="1.7" fill="#333"/><rect x="93.10" y="146" width="1.3" height="1.7" fill="#333"/><rect x="99.78" y="146" width="1.3" height="1.7" fill="#333"/><rect x="106.45" y="146" width="1.3" height="1.7" fill="#333"/><rect x="113.12" y="146" width="1.3" height="1.7" fill="#333"/><rect x="119.80" y="146" width="1.3" height="1.7" fill="#333"/><rect x="126.47" y="146" width="1.3" height="1.7" fill="#333"/><rect x="133.15" y="146" width="1.3" height="1.7" fill="#333"/><rect x="139.83" y="146" width="1.3" height="1.7" fill="#333"/><rect x="146.50" y="146" width="1.3" height="1.7" fill="#333"/><rect x="153.17" y="146" width="1.3" height="1.7" fill="#333"/><rect x="159.85" y="146" width="1.3" height="1.7" fill="#333"/><rect x="166.53" y="146" width="1.3" height="1.7" fill="#333"/><rect x="13.00" y="161" width="1.3" height="1.7" fill="#333"/><rect x="19.67" y="161" width="1.3" height="1.7" fill="#333"/><rect x="26.35" y="161" width="1.3" height="1.7" fill="#333"/><rect x="33.02" y="161" width="1.3" height="1.7" fill="#333"/><rect x="39.70" y="161" width="1.3" height="1.7" fill="#333"/><rect x="46.38" y="161" width="1.3" height="1.7" fill="#333"/><rect x="53.05" y="161" width="1.3" height="1.7" fill="#333"/><rect x="59.73" y="161" width="1.3" height="1.7" fill="#333"/><rect x="66.40" y="161" width="1.3" height="1.7" fill="#333"/><rect x="73.08" y="161" width="1.3" height="1.7" fill="#333"/><rect x="79.75" y="161" width="1.3" height="1.7" fill="#333"/><rect x="86.42" y="161" width="1.3" height="1.7" fill="#333"/><rect x="93.10" y="161" width="1.3" height="1.7" fill="#333"/><rect x="99.78" y="161" width="1.3" height="1.7" fill="#333"/><rect x="106.45" y="161" width="1.3" height="1.7" fill="#333"/><rect x="113.12" y="161" width="1.3" height="1.7" fill="#333"/><rect x="119.80" y="161" width="1.3" height="1.7" fill="#333"/><rect x="126.47" y="161" width="1.3" height="1.7" fill="#333"/><rect x="133.15" y="161" width="1.3" height="1.7" fill="#333"/><rect x="139.83" y="161" width="1.3" height="1.7" fill="#333"/><rect x="146.50" y="161" width="1.3" height="1.7" fill="#333"/><rect x="153.17" y="161" width="1.3" height="1.7" fill="#333"/><rect x="159.85" y="161" width="1.3" height="1.7" fill="#333"/><rect x="166.53" y="161" width="1.3" height="1.7" fill="#333"/><rect x="13.00" y="176" width="1.3" height="1.7" fill="#333"/><rect x="19.67" y="176" width="1.3" height="1.7" fill="#333"/><rect x="26.35" y="176" width="1.3" height="1.7" fill="#333"/><rect x="33.02" y="176" width="1.3" height="1.7" fill="#333"/><rect x="39.70" y="176" width="1.3" height="1.7" fill="#333"/><rect x="46.38" y="176" width="1.3" height="1.7" fill="#333"/><rect x="53.05" y="176" width="1.3" height="1.7" fill="#333"/><rect x="59.73" y="176" width="1.3" height="1.7" fill="#333"/><rect x="66.40" y="176" width="1.3" height="1.7" fill="#333"/><rect x="73.08" y="176" width="1.3" height="1.7" fill="#333"/><rect x="79.75" y="176" width="1.3" height="1.7" fill="#333"/><rect x="86.42" y="176" width="1.3" height="1.7" fill="#333"/><rect x="93.10" y="176" width="1.3" height="1.7" fill="#333"/><rect x="99.78" y="176" width="1.3" height="1.7" fill="#333"/><rect x="106.45" y="176" width="1.3" height="1.7" fill="#333"/><rect x="113.12" y="176" width="1.3" height="1.7" fill="#333"/><rect x="119.80" y="176" width="1.3" height="1.7" fill="#333"/><rect x="126.47" y="176" width="1.3" height="1.7" fill="#333"/><rect x="133.15" y="176" width="1.3" height="1.7" fill="#333"/><rect x="139.83" y="176" width="1.3" height="1.7" fill="#333"/><rect x="146.50" y="176" width="1.3" height="1.7" fill="#333"/><rect x="153.17" y="176" width="1.3" height="1.7" fill="#333"/><rect x="159.85" y="176" width="1.3" height="1.7" fill="#333"/><rect x="166.53" y="176" width="1.3" height="1.7" fill="#333"/><rect x="13.00" y="191" width="1.3" height="1.7" fill="#333"/><rect x="19.67" y="191" width="1.3" height="1.7" fill="#333"/><rect x="26.35" y="191" width="1.3" height="1.7" fill="#333"/><rect x="33.02" y="191" width="1.3" height="1.7" fill="#333"/><rect x="39.70" y="191" width="1.3" height="1.7" fill="#333"/><rect x="46.38" y="191" width="1.3" height="1.7" fill="#333"/><rect x="53.05" y="191" width="1.3" height="1.7" fill="#333"/><rect x="59.73" y="191" width="1.3" height="1.7" fill="#333"/><rect x="66.40" y="191" width="1.3" height="1.7" fill="#333"/><rect x="73.08" y="191" width="1.3" height="1.7" fill="#333"/><rect x="79.75" y="191" width="1.3" height="1.7" fill="#333"/><rect x="86.42" y="191" width="1.3" height="1.7" fill="#333"/><rect x="93.10" y="191" width="1.3" height="1.7" fill="#333"/><rect x="99.78" y="191" width="1.3" height="1.7" fill="#333"/><rect x="106.45" y="191" width="1.3" height="1.7" fill="#333"/><rect x="113.12" y="191" width="1.3" height="1.7" fill="#333"/><rect x="119.80" y="191" width="1.3" height="1.7" fill="#333"/><rect x="126.47" y="191" width="1.3" height="1.7" fill="#333"/><rect x="133.15" y="191" width="1.3" height="1.7" fill="#333"/><rect x="139.83" y="191" width="1.3" height="1.7" fill="#333"/><rect x="146.50" y="191" width="1.3" height="1.7" fill="#333"/><rect x="153.17" y="191" width="1.3" height="1.7" fill="#333"/><rect x="159.85" y="191" width="1.3" height="1.7" fill="#333"/><rect x="166.53" y="191" width="1.3" height="1.7" fill="#333"/><rect x="13.00" y="206" width="1.3" height="1.7" fill="#333"/><rect x="19.67" y="206" width="1.3" height="1.7" fill="#333"/><rect x="26.35" y="206" width="1.3" height="1.7" fill="#333"/><rect x="33.02" y="206" width="1.3" height="1.7" fill="#333"/><rect x="39.70" y="206" width="1.3" height="1.7" fill="#333"/><rect x="46.38" y="206" width="1.3" height="1.7" fill="#333"/><rect x="53.05" y="206" width="1.3" height="1.7" fill="#333"/><rect x="59.73" y="206" width="1.3" height="1.7" fill="#333"/><rect x="66.40" y="206" width="1.3" height="1.7" fill="#333"/><rect x="73.08" y="206" width="1.3" height="1.7" fill="#333"/><rect x="79.75" y="206" width="1.3" height="1.7" fill="#333"/><rect x="86.42" y="206" width="1.3" height="1.7" fill="#333"/><rect x="93.10" y="206" width="1.3" height="1.7" fill="#333"/><rect x="99.78" y="206" width="1.3" height="1.7" fill="#333"/><rect x="106.45" y="206" width="1.3" height="1.7" fill="#333"/><rect x="113.12" y="206" width="1.3" height="1.7" fill="#333"/><rect x="119.80" y="206" width="1.3" height="1.7" fill="#333"/><rect x="126.47" y="206" width="1.3" height="1.7" fill="#333"/><rect x="133.15" y="206" width="1.3" height="1.7" fill="#333"/><rect x="139.83" y="206" width="1.3" height="1.7" fill="#333"/><rect x="146.50" y="206" width="1.3" height="1.7" fill="#333"/><rect x="153.17" y="206" width="1.3" height="1.7" fill="#333"/><rect x="159.85" y="206" width="1.3" height="1.7" fill="#333"/><rect x="166.53" y="206" width="1.3" height="1.7" fill="#333"/><rect x="13.00" y="221" width="1.3" height="1.7" fill="#333"/><rect x="19.67" y="221" width="1.3" height="1.7" fill="#333"/><rect x="26.35" y="221" width="1.3" height="1.7" fill="#333"/><rect x="33.02" y="221" width="1.3" height="1.7" fill="#333"/><rect x="39.70" y="221" width="1.3" height="1.7" fill="#333"/><rect x="46.38" y="221" width="1.3" height="1.7" fill="#333"/><rect x="53.05" y="221" width="1.3" height="1.7" fill="#333"/><rect x="59.73" y="221" width="1.3" height="1.7" fill="#333"/><rect x="66.40" y="221" width="1.3" height="1.7" fill="#333"/><rect x="73.08" y="221" width="1.3" height="1.7" fill="#333"/><rect x="79.75" y="221" width="1.3" height="1.7" fill="#333"/><rect x="86.42" y="221" width="1.3" height="1.7" fill="#333"/><rect x="93.10" y="221" width="1.3" height="1.7" fill="#333"/><rect x="99.78" y="221" width="1.3" height="1.7" fill="#333"/><rect x="106.45" y="221" width="1.3" height="1.7" fill="#333"/><rect x="113.12" y="221" width="1.3" height="1.7" fill="#333"/><rect x="119.80" y="221" width="1.3" height="1.7" fill="#333"/><rect x="126.47" y="221" width="1.3" height="1.7" fill="#333"/><rect x="133.15" y="221" width="1.3" height="1.7" fill="#333"/><rect x="139.83" y="221" width="1.3" height="1.7" fill="#333"/><rect x="146.50" y="221" width="1.3" height="1.7" fill="#333"/><rect x="153.17" y="221" width="1.3" height="1.7" fill="#333"/><rect x="159.85" y="221" width="1.3" height="1.7" fill="#333"/><rect x="166.53" y="221" width="1.3" height="1.7" fill="#333"/><rect x="13.00" y="236" width="1.3" height="1.7" fill="#333"/><rect x="19.67" y="236" width="1.3" height="1.7" fill="#333"/><rect x="26.35" y="236" width="1.3" height="1.7" fill="#333"/><rect x="33.02" y="236" width="1.3" height="1.7" fill="#333"/><rect x="39.70" y="236" width="1.3" height="1.7" fill="#333"/><rect x="46.38" y="236" width="1.3" height="1.7" fill="#333"/><rect x="53.05" y="236" width="1.3" height="1.7" fill="#333"/><rect x="59.73" y="236" width="1.3" height="1.7" fill="#333"/><rect x="66.40" y="236" width="1.3" height="1.7" fill="#333"/><rect x="73.08" y="236" width="1.3" height="1.7" fill="#333"/><rect x="79.75" y="236" width="1.3" height="1.7" fill="#333"/><rect x="86.42" y="236" width="1.3" height="1.7" fill="#333"/><rect x="93.10" y="236" width="1.3" height="1.7" fill="#333"/><rect x="99.78" y="236" width="1.3" height="1.7" fill="#333"/><rect x="106.45" y="236" width="1.3" height="1.7" fill="#333"/><rect x="113.12" y="236" width="1.3" height="1.7" fill="#333"/><rect x="119.80" y="236" width="1.3" height="1.7" fill="#333"/><rect x="126.47" y="236" width="1.3" height="1.7" fill="#333"/><rect x="133.15" y="236" width="1.3" height="1.7" fill="#333"/><rect x="139.83" y="236" width="1.3" height="1.7" fill="#333"/><rect x="146.50" y="236" width="1.3" height="1.7" fill="#333"/><rect x="153.17" y="236" width="1.3" height="1.7" fill="#333"/><rect x="159.85" y="236" width="1.3" height="1.7" fill="#333"/><rect x="166.53" y="236" width="1.3" height="1.7" fill="#333"/><rect x="13.00" y="251" width="1.3" height="1.7" fill="#333"/><rect x="19.67" y="251" width="1.3" height="1.7" fill="#333"/><rect x="26.35" y="251" width="1.3" height="1.7" fill="#333"/><rect x="33.02" y="251" width="1.3" height="1.7" fill="#333"/><rect x="39.70" y="251" width="1.3" height="1.7" fill="#333"/><rect x="46.38" y="251" width="1.3" height="1.7" fill="#333"/><rect x="53.05" y="251" width="1.3" height="1.7" fill="#333"/><rect x="59.73" y="251" width="1.3" height="1.7" fill="#333"/><rect x="66.40" y="251" width="1.3" height="1.7" fill="#333"/><rect x="73.08" y="251" width="1.3" height="1.7" fill="#333"/><rect x="79.75" y="251" width="1.3" height="1.7" fill="#333"/><rect x="86.42" y="251" width="1.3" height="1.7" fill="#333"/><rect x="93.10" y="251" width="1.3" height="1.7" fill="#333"/><rect x="99.78" y="251" width="1.3" height="1.7" fill="#333"/><rect x="106.45" y="251" width="1.3" height="1.7" fill="#333"/><rect x="113.12" y="251" width="1.3" height="1.7" fill="#333"/><rect x="119.80" y="251" width="1.3" height="1.7" fill="#333"/><rect x="126.47" y="251" width="1.3" height="1.7" fill="#333"/><rect x="133.15" y="251" width="1.3" height="1.7" fill="#333"/><rect x="139.83" y="251" width="1.3" height="1.7" fill="#333"/><rect x="146.50" y="251" width="1.3" height="1.7" fill="#333"/><rect x="153.17" y="251" width="1.3" height="1.7" fill="#333"/><rect x="159.85" y="251" width="1.3" height="1.7" fill="#333"/><rect x="166.53" y="251" width="1.3" height="1.7" fill="#333"/><rect x="13.00" y="266" width="1.3" height="1.7" fill="#333"/><rect x="19.67" y="266" width="1.3" height="1.7" fill="#333"/><rect x="26.35" y="266" width="1.3" height="1.7" fill="#333"/><rect x="33.02" y="266" width="1.3" height="1.7" fill="#333"/><rect x="39.70" y="266" width="1.3" height="1.7" fill="#333"/><rect x="46.38" y="266" width="1.3" height="1.7" fill="#333"/><rect x="53.05" y="266" width="1.3" height="1.7" fill="#333"/><rect x="59.73" y="266" width="1.3" height="1.7" fill="#333"/><rect x="66.40" y="266" width="1.3" height="1.7" fill="#333"/><rect x="73.08" y="266" width="1.3" height="1.7" fill="#333"/><rect x="79.75" y="266" width="1.3" height="1.7" fill="#333"/><rect x="86.42" y="266" width="1.3" height="1.7" fill="#333"/><rect x="93.10" y="266" width="1.3" height="1.7" fill="#333"/><rect x="99.78" y="266" width="1.3" height="1.7" fill="#333"/><rect x="106.45" y="266" width="1.3" height="1.7" fill="#333"/><rect x="113.12" y="266" width="1.3" height="1.7" fill="#333"/><rect x="119.80" y="266" width="1.3" height="1.7" fill="#333"/><rect x="126.47" y="266" width="1.3" height="1.7" fill="#333"/><rect x="133.15" y="266" width="1.3" height="1.7" fill="#333"/><rect x="139.83" y="266" width="1.3" height="1.7" fill="#333"/><rect x="146.50" y="266" width="1.3" height="1.7" fill="#333"/><rect x="153.17" y="266" width="1.3" height="1.7" fill="#333"/><rect x="159.85" y="266" width="1.3" height="1.7" fill="#333"/><rect x="166.53" y="266" width="1.3" height="1.7" fill="#333"/><rect x="173.20" y="266" width="1.3" height="1.7" fill="#333"/><rect x="13.00" y="281" width="1.3" height="1.7" fill="#333"/><rect x="19.67" y="281" width="1.3" height="1.7" fill="#333"/><rect x="26.35" y="281" width="1.3" height="1.7" fill="#333"/><rect x="33.02" y="281" width="1.3" height="1.7" fill="#333"/><rect x="39.70" y="281" width="1.3" height="1.7" fill="#333"/><rect x="46.38" y="281" width="1.3" height="1.7" fill="#333"/><rect x="53.05" y="281" width="1.3" height="1.7" fill="#333"/><rect x="59.73" y="281" width="1.3" height="1.7" fill="#333"/><rect x="66.40" y="281" width="1.3" height="1.7" fill="#333"/><rect x="73.08" y="281" width="1.3" height="1.7" fill="#333"/><rect x="79.75" y="281" width="1.3" height="1.7" fill="#333"/><rect x="86.42" y="281" width="1.3" height="1.7" fill="#333"/><rect x="93.10" y="281" width="1.3" height="1.7" fill="#333"/><rect x="99.78" y="281" width="1.3" height="1.7" fill="#333"/><rect x="106.45" y="281" width="1.3" height="1.7" fill="#333"/><rect x="113.12" y="281" width="1.3" height="1.7" fill="#333"/><rect x="119.80" y="281" width="1.3" height="1.7" fill="#333"/><rect x="126.47" y="281" width="1.3" height="1.7" fill="#333"/><rect x="133.15" y="281" width="1.3" height="1.7" fill="#333"/><rect x="139.83" y="281" width="1.3" height="1.7" fill="#333"/><rect x="146.50" y="281" width="1.3" height="1.7" fill="#333"/><rect x="153.17" y="281" width="1.3" height="1.7" fill="#333"/><rect x="159.85" y="281" width="1.3" height="1.7" fill="#333"/><rect x="166.53" y="281" width="1.3" height="1.7" fill="#333"/><rect x="13.00" y="296" width="1.3" height="1.7" fill="#333"/><rect x="19.67" y="296" width="1.3" height="1.7" fill="#333"/><rect x="26.35" y="296" width="1.3" height="1.7" fill="#333"/><rect x="33.02" y="296" width="1.3" height="1.7" fill="#333"/><rect x="39.70" y="296" width="1.3" height="1.7" fill="#333"/><rect x="46.38" y="296" width="1.3" height="1.7" fill="#333"/><rect x="53.05" y="296" width="1.3" height="1.7" fill="#333"/><rect x="59.73" y="296" width="1.3" height="1.7" fill="#333"/><rect x="66.40" y="296" width="1.3" height="1.7" fill="#333"/><rect x="73.08" y="296" width="1.3" height="1.7" fill="#333"/><rect x="79.75" y="296" width="1.3" height="1.7" fill="#333"/><rect x="86.42" y="296" width="1.3" height="1.7" fill="#333"/><rect x="93.10" y="296" width="1.3" height="1.7" fill="#333"/><rect x="99.78" y="296" width="1.3" height="1.7" fill="#333"/><rect x="106.45" y="296" width="1.3" height="1.7" fill="#333"/><rect x="113.12" y="296" width="1.3" height="1.7" fill="#333"/><rect x="119.80" y="296" width="1.3" height="1.7" fill="#333"/><rect x="126.47" y="296" width="1.3" height="1.7" fill="#333"/><rect x="133.15" y="296" width="1.3" height="1.7" fill="#333"/><rect x="139.83" y="296" width="1.3" height="1.7" fill="#333"/><rect x="146.50" y="296" width="1.3" height="1.7" fill="#333"/><rect x="153.17" y="296" width="1.3" height="1.7" fill="#333"/><rect x="159.85" y="296" width="1.3" height="1.7" fill="#333"/><rect x="166.53" y="296" width="1.3" height="1.7" fill="#333"/><rect x="13.00" y="311" width="1.3" height="1.7" fill="#333"/><rect x="19.67" y="311" width="1.3" height="1.7" fill="#333"/><rect x="26.35" y="311" width="1.3" height="1.7" fill="#333"/><rect x="33.02" y="311" width="1.3" height="1.7" fill="#333"/><rect x="39.70" y="311" width="1.3" height="1.7" fill="#333"/><rect x="46.38" y="311" width="1.3" height="1.7" fill="#333"/><rect x="53.05" y="311" width="1.3" height="1.7" fill="#333"/><rect x="59.73" y="311" width="1.3" height="1.7" fill="#333"/><rect x="66.40" y="311" width="1.3" height="1.7" fill="#333"/><rect x="73.08" y="311" width="1.3" height="1.7" fill="#333"/><rect x="79.75" y="311" width="1.3" height="1.7" fill="#333"/><rect x="86.42" y="311" width="1.3" height="1.7" fill="#333"/><rect x="93.10" y="311" width="1.3" height="1.7" fill="#333"/><rect x="99.78" y="311" width="1.3" height="1.7" fill="#333"/><rect x="106.45" y="311" width="1.3" height="1.7" fill="#333"/><rect x="113.12" y="311" width="1.3" height="1.7" fill="#333"/><rect x="119.80" y="311" width="1.3" height="1.7" fill="#333"/><rect x="126.47" y="311" width="1.3" height="1.7" fill="#333"/><rect x="133.15" y="311" width="1.3" height="1.7" fill="#333"/><rect x="139.83" y="311" width="1.3" height="1.7" fill="#333"/><rect x="146.50" y="311" width="1.3" height="1.7" fill="#333"/><rect x="153.17" y="311" width="1.3" height="1.7" fill="#333"/><rect x="159.85" y="311" width="1.3" height="1.7" fill="#333"/><rect x="166.53" y="311" width="1.3" height="1.7" fill="#333"/></svg>
<div style="position:absolute;left:1113px;top:502px;width:277px;height:13px;background:#fff"></div>
<div class="t" style="left:945px;top:503px;background:#ECE9D8;padding-right:2px">Тип границы</div>
<div class="t" style="left:1115px;top:503px;">Сплошная</div>
<div style="position:absolute;left:1113px;top:517px;width:277px;height:13px;background:#fff"></div>
<div class="t" style="left:945px;top:518px;background:#ECE9D8;padding-right:2px">Цвет границы</div>
<div class="t" style="left:1115px;top:518px;">13209</div>
<div style="position:absolute;left:1113px;top:532px;width:277px;height:13px;background:#fff"></div>
<div class="t" style="left:945px;top:533px;background:#ECE9D8;padding-right:2px">Ширина границы</div>
<div class="t" style="left:1115px;top:533px;">Сверхтонкая</div>
<div style="position:absolute;left:1113px;top:547px;width:277px;height:13px;background:#fff"></div>
<div class="t" style="left:945px;top:548px;background:#ECE9D8;padding-right:2px">Цвет текста</div>
<div class="t" style="left:1115px;top:548px;">0</div>
<div style="position:absolute;left:1113px;top:562px;width:277px;height:13px;background:#fff"></div>
<div class="t" style="left:945px;top:563px;background:#ECE9D8;padding-right:2px">Шрифт</div>
<div class="t" style="left:1115px;top:563px;">Arial Cyr</div>
<div style="position:absolute;left:1113px;top:577px;width:277px;height:13px;background:#fff"></div>
<div class="t" style="left:945px;top:578px;background:#ECE9D8;padding-right:2px">Размер шрифта</div>
<div class="t" style="left:1115px;top:578px;">9</div>
<div style="position:absolute;left:1113px;top:592px;width:277px;height:13px;background:#fff"></div>
<div class="t" style="left:945px;top:593px;background:#ECE9D8;padding-right:2px">Насыщенность</div>
<div class="t" style="left:1115px;top:593px;">обычный</div>
<div style="position:absolute;left:1113px;top:607px;width:277px;height:13px;background:#fff"></div>
<div class="t" style="left:945px;top:608px;background:#ECE9D8;padding-right:2px">Курсив</div>
<div class="t" style="left:1115px;top:608px;">Нет</div>
<div style="position:absolute;left:1113px;top:622px;width:277px;height:13px;background:#fff"></div>
<div class="t" style="left:945px;top:623px;background:#ECE9D8;padding-right:2px">Подчеркнутый</div>
<div class="t" style="left:1115px;top:623px;">Нет</div>
<div style="position:absolute;left:1113px;top:637px;width:277px;height:13px;background:#fff"></div>
<div class="t" style="left:945px;top:638px;background:#ECE9D8;padding-right:2px">Выравнивание текста</div>
<div class="t" style="left:1115px;top:638px;">Обычное</div>
<div style="position:absolute;left:1113px;top:652px;width:277px;height:13px;background:#fff"></div>
<div class="t" style="left:945px;top:653px;background:#ECE9D8;padding-right:2px">Контекстное меню</div>
<div class="t" style="left:1115px;top:653px;"></div>
<div style="position:absolute;left:1113px;top:667px;width:277px;height:13px;background:#fff"></div>
<div class="t" style="left:945px;top:668px;background:#ECE9D8;padding-right:2px">Всплывающая подсказка</div>
<div class="t" style="left:1115px;top:668px;"></div>
<div style="position:absolute;left:1113px;top:682px;width:277px;height:13px;background:#fff"></div>
<div class="t" style="left:945px;top:683px;background:#ECE9D8;padding-right:2px">Идентификатор справки</div>
<div class="t" style="left:1115px;top:683px;">0</div>
<div style="position:absolute;left:1113px;top:697px;width:277px;height:13px;background:#fff"></div>
<div class="t" style="left:945px;top:698px;background:#ECE9D8;padding-right:2px">Дополнительные сведения</div>
<div class="t" style="left:1115px;top:698px;"></div>
<div style="position:absolute;left:1113px;top:712px;width:277px;height:13px;background:#fff"></div>
<div class="t" style="left:945px;top:713px;background:#ECE9D8;padding-right:2px">До обновления</div>
<div class="t" style="left:1115px;top:713px;"></div>
<div style="position:absolute;left:1113px;top:727px;width:277px;height:13px;background:#fff"></div>
<div class="t" style="left:945px;top:728px;background:#ECE9D8;padding-right:2px">После обновления</div>
<div class="t" style="left:1115px;top:728px;"></div>
<div style="position:absolute;left:1113px;top:742px;width:277px;height:13px;background:#fff"></div>
<div class="t" style="left:945px;top:743px;background:#ECE9D8;padding-right:2px">Внесены изменения</div>
<div class="t" style="left:1115px;top:743px;"></div>
<div style="position:absolute;left:1113px;top:757px;width:277px;height:13px;background:#fff"></div>
<div class="t" style="left:945px;top:758px;background:#ECE9D8;padding-right:2px">Отмена</div>
<div class="t" style="left:1115px;top:758px;"></div>
<div style="position:absolute;left:1113px;top:772px;width:277px;height:13px;background:#fff"></div>
<div class="t" style="left:945px;top:773px;background:#ECE9D8;padding-right:2px">Изменение</div>
<div class="t" style="left:1115px;top:773px;"></div>
<div style="position:absolute;left:1113px;top:787px;width:277px;height:13px;background:#fff"></div>
<div class="t" style="left:945px;top:788px;background:#ECE9D8;padding-right:2px">Вход</div>
<div class="t" style="left:1115px;top:788px;"></div>
<div style="position:absolute;left:1113px;top:802px;width:277px;height:13px;background:#fff"></div>
<div class="t" style="left:945px;top:803px;background:#ECE9D8;padding-right:2px">Выход</div>
<div class="t" style="left:1115px;top:803px;"></div>
<div style="position:absolute;left:1113px;top:816px;width:277px;height:7px;background:#fff"></div>
<div style="position:absolute;left:934px;top:501px;width:1px;height:323px;background:#fff"></div>
<div style="position:absolute;left:934px;top:823px;width:497px;height:1px;background:#9D9A88"></div>
<div style="position:absolute;left:930px;top:827px;width:505px;height:1px;background:#5A6AD0"></div>
<div style="position:absolute;left:1410px;top:503px;width:16px;height:16px;background:linear-gradient(135deg,#D8E4FC,#B9CDF8);border:1px solid #B5C8F0;border-radius:2px;box-shadow:0 1px 0 #fff"></div><svg style="left:1412px;top:506px" width="12" height="10" viewBox="0 0 12 10"><path d="M2 7 L6 3 L10 7" stroke="#4D6185" stroke-width="2" fill="none"/></svg>
<div style="position:absolute;left:1410px;top:804px;width:16px;height:16px;background:linear-gradient(135deg,#D8E4FC,#B9CDF8);border:1px solid #B5C8F0;border-radius:2px;box-shadow:0 1px 0 #fff"></div><svg style="left:1412px;top:807px" width="12" height="10" viewBox="0 0 12 10"><path d="M2 3 L6 7 L10 3" stroke="#4D6185" stroke-width="2" fill="none"/></svg>
<div style="position:absolute;left:1412px;top:686px;width:13px;height:14px;background:linear-gradient(135deg,#DCE6FD,#BCD0FA);border:1px solid #C4D4F6;border-radius:2px;box-shadow:0 1px 0 #7FA0E0"></div>
<svg style="left:1415px;top:689px" width="7" height="8" viewBox="0 0 7 8"><path d="M0 0.5 H7 M0 2.5 H7 M0 4.5 H7 M0 6.5 H7" stroke="#8CB0F8"/></svg>
<div style="position:absolute;left:1427px;top:501px;width:4px;height:322px;background:#ECE9D8"></div>
<div style="position:absolute;left:1429px;top:501px;width:1px;height:322px;background:#8E8A78"></div></body></html>
